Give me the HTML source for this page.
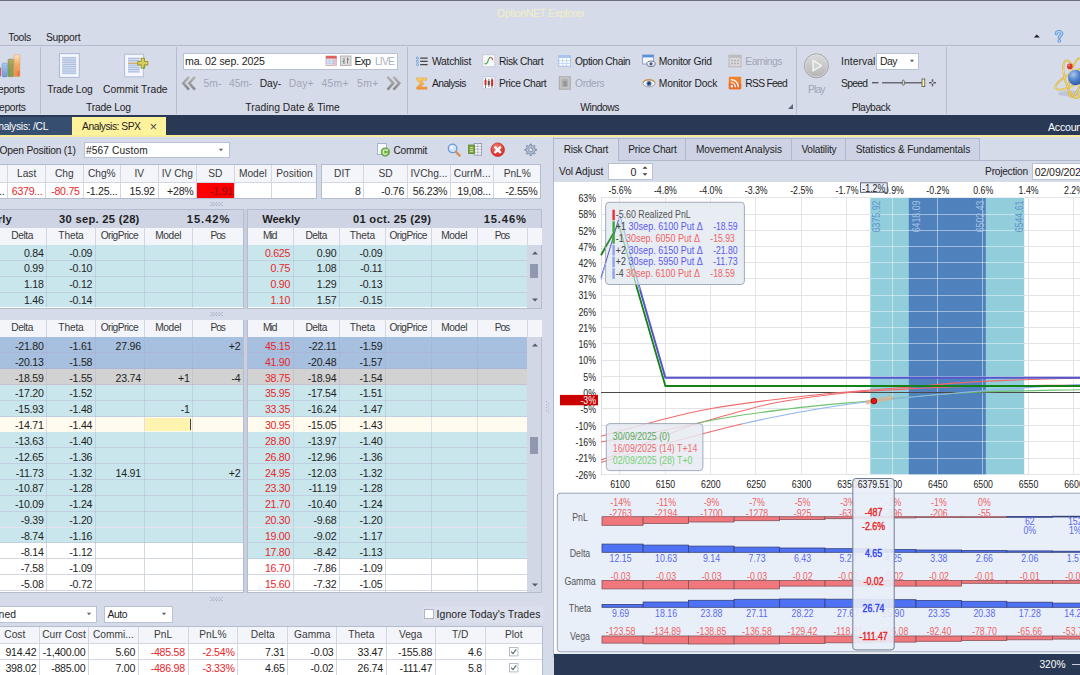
<!DOCTYPE html>
<html><head><meta charset="utf-8"><title>OptionNET Explorer</title>
<style>
html,body{margin:0;padding:0;}
body{width:1080px;height:675px;overflow:hidden;position:relative;background:#d6dbe9;font-family:"Liberation Sans",sans-serif;font-size:10px;color:#1e1e1e;}
.t{position:absolute;white-space:nowrap;line-height:14px;height:14px;font-size:10.3px;}
.g{color:#9ea6b8;}
.r{color:#e8262a;}
svg{position:absolute;overflow:visible;}
svg text{font-family:"Liberation Sans",sans-serif;}
</style></head><body>

<div style="position:absolute;left:0px;top:0px;width:1080px;height:1px;background:#6a6e78;"></div>
<span class="t" style="top:6.7px;letter-spacing:-0.234px;left:540.88px;transform:translateX(-50%);color:#f3efc4;">OptionNET Explorer</span>
<span class="t" style="top:30.7px;letter-spacing:-0.311px;left:8.3px;">Tools</span>
<span class="t" style="top:30.7px;letter-spacing:-0.263px;left:46px;">Support</span>
<div style="position:absolute;left:0px;top:45px;width:1080px;height:1px;background:#b3bacb;"></div>
<svg style="left:1030px;top:28px" width="14" height="16" viewBox="0 0 14 16"><path d="M3.8 9.6 L6.8 6.6 L9.8 9.6 Z" fill="#1e1e1e"/></svg>
<svg style="left:1052.7px;top:28.6px" width="12" height="14" viewBox="0 0 14 16">
<path d="M3.8 5.2C4 2 10.2 2 10.2 5C10.2 7.4 7.3 7.4 7.3 10" fill="none" stroke="#5f90d4" stroke-width="3.7" stroke-linecap="round"/>
<path d="M3.8 5.2C4 2 10.2 2 10.2 5C10.2 7.4 7.3 7.4 7.3 10" fill="none" stroke="#a8ccf6" stroke-width="2" stroke-linecap="round"/>
<circle cx="7.3" cy="13.7" r="1.7" fill="#a8ccf6" stroke="#5f90d4" stroke-width=".9"/></svg>
<div style="position:absolute;left:40px;top:47px;width:1px;height:67px;background:#b6bdce;"></div>
<div style="position:absolute;left:176px;top:47px;width:1px;height:67px;background:#b6bdce;"></div>
<div style="position:absolute;left:407px;top:47px;width:1px;height:67px;background:#b6bdce;"></div>
<div style="position:absolute;left:796px;top:47px;width:1px;height:67px;background:#b6bdce;"></div>
<div style="position:absolute;left:946px;top:47px;width:1px;height:67px;background:#b6bdce;"></div>
<span class="t" style="top:100.7px;letter-spacing:-0.344px;right:1054.34px;">Reports</span>
<span class="t" style="top:100.7px;letter-spacing:-0.196px;left:108.5px;transform:translateX(-50%);">Trade Log</span>
<span class="t" style="top:100.7px;letter-spacing:0.024px;left:292.51px;transform:translateX(-50%);">Trading Date &amp; Time</span>
<span class="t" style="top:100.7px;letter-spacing:-0.447px;left:599.68px;transform:translateX(-50%);">Windows</span>
<span class="t" style="top:100.7px;letter-spacing:-0.413px;left:870.99px;transform:translateX(-50%);">Playback</span>
<svg style="left:787px;top:103px" width="8" height="8" viewBox="0 0 8 8"><path d="M6 1 L6 6 L1 6 Z" fill="#5a6478"/></svg>
<svg style="left:0;top:52px" width="24" height="28" viewBox="0 0 24 28">
<defs><linearGradient id="b1" x1="0" y1="0" x2="0" y2="1"><stop offset="0" stop-color="#fde6b8"/><stop offset=".45" stop-color="#f4a862"/><stop offset="1" stop-color="#ec8a4c"/></linearGradient>
<linearGradient id="b2" x1="0" y1="0" x2="0" y2="1"><stop offset="0" stop-color="#b4ae6c"/><stop offset=".4" stop-color="#9c9c52"/><stop offset="1" stop-color="#8c9a4a"/></linearGradient>
<linearGradient id="b3" x1="0" y1="0" x2="0" y2="1"><stop offset="0" stop-color="#a4ccf2"/><stop offset="1" stop-color="#6a9ad8"/></linearGradient></defs>
<rect x="-3" y="15.6" width="4.1" height="8.9" rx=".8" fill="#d8585a"/>
<rect x="2.1" y="11.2" width="5.3" height="13.7" rx="1" fill="url(#b3)" stroke="#5f8fd2" stroke-width=".5"/>
<rect x="8" y="7.1" width="5.7" height="17.6" rx="1" fill="url(#b2)" stroke="#8a8a50" stroke-width=".5"/>
<rect x="14.1" y="2.8" width="5.8" height="21.7" rx="1" fill="url(#b1)" stroke="#d69a6a" stroke-width=".5"/>
<rect x="17.6" y="19" width="2" height="5.2" fill="#e2603c" opacity=".6"/>
<rect x="8.3" y="16" width="1.2" height="8.4" fill="#6aa85a" opacity=".6"/>
</svg>
<span class="t" style="top:82.7px;letter-spacing:-0.344px;right:1055.34px;">Reports</span>
<svg style="left:58px;top:52px" width="24" height="28" viewBox="0 0 24 28">
<rect x="1.5" y="1.6" width="19.8" height="23.8" fill="#f6f8fd" stroke="#aebbd6" stroke-width="1.1"/>
<rect x="4.2" y="4.8" width="14" height="17.6" fill="#d3ddf1"/>
<g stroke="#a9bbdf" stroke-width="1"><path d="M4.2 5.8H18.2M4.2 8H18.2M4.2 10.2H18.2M4.2 12.4H18.2M4.2 14.6H18.2M4.2 16.8H18.2M4.2 19H18.2M4.2 21.2H18.2"/></g>
</svg>
<span class="t" style="top:82.7px;letter-spacing:-0.146px;left:47.3px;">Trade Log</span>
<svg style="left:123px;top:52px" width="30" height="28" viewBox="0 0 30 28">
<rect x="1.6" y="2.2" width="18.8" height="22.6" fill="#f6f8fd" stroke="#b4c0d8" stroke-width="1.1"/>
<rect x="5" y="5.4" width="11.6" height="15.4" fill="#d6dff2"/>
<g stroke="#aabce0" stroke-width="1"><path d="M5 6.4H16.6M5 8.6H16.6M5 13.2H16.6M5 15.4H16.6M5 17.6H16.6M5 19.8H16.6"/></g>
<path d="M5 11.2H17" stroke="#cfa24c" stroke-width="1.1"/>
<path d="M14.3 11.3H25.3M19.8 5.8V16.8" stroke="#a09a34" stroke-width="4.4"/>
<path d="M15.2 11.1H24.4M19.8 6.7V15.9" stroke="#d8d05c" stroke-width="2.2"/>
<path d="M20 16.4L22 14.2" stroke="#5aae4a" stroke-width="1.4"/>
</svg>
<span class="t" style="top:82.7px;letter-spacing:-0.016px;left:103.1px;">Commit Trade</span>
<div style="position:absolute;left:183px;top:52.6px;width:213px;height:15px;background:#fff;border:1px solid #b9c1d4;"></div>
<span class="t" style="top:54.3px;letter-spacing:-0.127px;left:185px;font-size:10.6px;">ma. 02 sep. 2025</span>
<svg style="left:325px;top:55px" width="28" height="12" viewBox="0 0 28 12">
<rect x="1" y="1" width="10.5" height="9.5" fill="#dfe7f8" stroke="#c9a6a8" stroke-width=".8"/>
<rect x="8" y="3.6" width="3.5" height="6.9" fill="#f4c4c8"/>
<rect x="1" y="1" width="10.5" height="2.6" fill="#e0605c"/>
<g stroke="#b8c4e0" stroke-width=".7"><path d="M1 6H11.5M1 8.3H11.5M4.5 3.6V10.5M8 3.6V10.5"/></g>
<rect x="15.5" y="1" width="10.5" height="9.5" fill="#dcdcdc" stroke="#a8a8a8" stroke-width=".8"/>
<path d="M19 3V9M19 6.5H17.5M22.5 2.5V8.5M22.5 4.5H24" stroke="#777" stroke-width=".9" fill="none"/>
</svg>
<span class="t" style="top:54.5px;letter-spacing:-0.624px;left:354.5px;">Exp</span>
<span class="t" style="top:54.5px;letter-spacing:-0.777px;left:374.9px;color:#aab1c1;">LIVE</span>
<svg style="left:180px;top:76px" width="224" height="14" viewBox="0 0 224 14">
<defs><linearGradient id="cg" x1="0" y1="0" x2="0" y2="1"><stop offset="0" stop-color="#b4b4b4"/><stop offset="1" stop-color="#868686"/></linearGradient></defs>
<g fill="none" stroke="url(#cg)" stroke-width="2.5" stroke-linejoin="miter"><path d="M9 0.8 L3.2 7.2 L9 13.6 M15 0.8 L9.2 7.2 L15 13.6"/><path d="M207.5 0.8 L213.3 7.2 L207.5 13.6 M213.5 0.8 L219.3 7.2 L213.5 13.6"/></g>
</svg>
<span class="t g" style="top:76.7px;letter-spacing:0.031px;left:203.6px;">5m-</span>
<span class="t g" style="top:76.7px;letter-spacing:-0.089px;left:229px;">45m-</span>
<span class="t" style="top:76.7px;letter-spacing:-0.149px;left:259.8px;">Day-</span>
<span class="t g" style="top:76.7px;letter-spacing:0.044px;left:288.8px;font-size:10.4px;">Day+</span>
<span class="t g" style="top:76.7px;letter-spacing:0.232px;left:321.6px;font-size:10.4px;">45m+</span>
<span class="t g" style="top:76.7px;letter-spacing:0.390px;left:357px;font-size:10.4px;">5m+</span>
<svg style="left:415px;top:53.8px" width="14" height="14" viewBox="0 0 14 14"><g fill="#dbe8fa" stroke="#5b8fd6" stroke-width=".8"><circle cx="2.4" cy="4.1" r="1.05"/><circle cx="2.4" cy="7.35" r="1.05"/><circle cx="2.4" cy="10.6" r="1.05"/></g><path d="M5.2 4.1H12.6M5.2 7.35H12.6M5.2 10.6H12.6" stroke="#444" stroke-width="1.25"/></svg>
<span class="t" style="top:55.2px;letter-spacing:-0.250px;left:432px;">Watchlist</span>
<svg style="left:415px;top:75.8px" width="14" height="14" viewBox="0 0 14 14"><defs><linearGradient id="sg" x1="0" y1="0" x2="0" y2="1"><stop offset="0" stop-color="#f8d468"/><stop offset="1" stop-color="#ee8c38"/></linearGradient></defs><path d="M1.6 1.9H11.6V4.3H6.2L9 7.5L6 10.9H12V13.3H1.6V11.3L5.2 7.5L1.6 3.9Z" fill="url(#sg)" stroke="#e09838" stroke-width=".5"/></svg>
<span class="t" style="top:77.2px;letter-spacing:-0.579px;left:432px;">Analysis</span>
<svg style="left:482px;top:53.8px" width="14" height="14" viewBox="0 0 14 14"><rect x=".8" y=".8" width="12" height="12" fill="#f8f9fc" stroke="#c0c6d4" stroke-width=".8"/><path d="M2.5 9.5C4.5 10.5 5.5 9 6 7S7.5 3 9 3.5" fill="none" stroke="#4aa04a" stroke-width="1.1"/><path d="M9 3.5C10.5 4 10.5 6 11 6" fill="none" stroke="#d04040" stroke-width="1.1"/></svg>
<span class="t" style="top:55.2px;letter-spacing:-0.397px;left:499px;">Risk Chart</span>
<svg style="left:482px;top:75.8px" width="14" height="14" viewBox="0 0 14 14"><rect x=".8" y=".8" width="12" height="12" fill="#f8f9fc" stroke="#c0c6d4" stroke-width=".8"/><path d="M3.5 2V12M6.8 3V11M10 2V12" stroke="#444" stroke-width=".7"/><rect x="2.5" y="4" width="2" height="5" fill="#d83030"/><rect x="5.8" y="5" width="2" height="4" fill="#555"/><rect x="9" y="3.5" width="2.2" height="6.5" fill="#d83030"/></svg>
<span class="t" style="top:77.2px;letter-spacing:-0.382px;left:499px;">Price Chart</span>
<svg style="left:558px;top:53.8px" width="14" height="14" viewBox="0 0 14 14"><rect x=".8" y="1.6" width="11.8" height="10.6" fill="#fff" stroke="#9dbbe6" stroke-width=".9"/><rect x=".8" y="1.6" width="11.8" height="2.4" fill="#a6c6f0"/><path d="M.8 6.7H12.6M.8 9.4H12.6M4.7 1.6V12.2M8.7 1.6V12.2" stroke="#b6cef0" stroke-width=".8"/></svg>
<span class="t" style="top:55.2px;letter-spacing:-0.411px;left:575px;">Option Chain</span>
<svg style="left:558px;top:75.8px" width="14" height="14" viewBox="0 0 14 14"><rect x="1.3" y=".8" width="11" height="12.4" fill="#c4c4c4" stroke="#a6a6a6" stroke-width=".9"/><rect x="3.5" y="3" width="6.6" height="8" fill="#b0b0b0"/><text x="6.9" y="10" font-size="7" text-anchor="middle" fill="#8a8a8a" font-weight="bold">$</text></svg>
<span class="t g" style="top:77.2px;letter-spacing:-0.356px;left:575px;">Orders</span>
<svg style="left:642px;top:53.8px" width="14" height="14" viewBox="0 0 14 14"><rect x=".6" y="1" width="11" height="9" fill="#f4f7fc" stroke="#7a9fd6" stroke-width=".9"/><rect x=".6" y="1" width="11" height="2.4" fill="#5b8fd6"/><ellipse cx="9" cy="9.8" rx="4.2" ry="2.7" fill="#f2f2f2" stroke="#556" stroke-width=".8"/><circle cx="9" cy="9.8" r="1.6" fill="#3d5f96"/></svg>
<span class="t" style="top:55.2px;letter-spacing:-0.306px;left:658.8px;">Monitor Grid</span>
<svg style="left:642px;top:75.8px" width="14" height="14" viewBox="0 0 14 14"><ellipse cx="7" cy="7.4" rx="6" ry="3.5" fill="#f4f4f4" stroke="#8a8690" stroke-width=".8"/><path d="M1 6.6C3 2.6 11 2.6 13 6.6" fill="none" stroke="#c89858" stroke-width="1.2"/><circle cx="7" cy="7.4" r="2.5" fill="#4a6faa"/><circle cx="7" cy="7.4" r="1.1" fill="#1d2d50"/></svg>
<span class="t" style="top:77.2px;letter-spacing:-0.189px;left:658.8px;">Monitor Dock</span>
<svg style="left:728px;top:53.8px" width="14" height="14" viewBox="0 0 14 14"><rect x="1" y="1.2" width="12" height="11.6" fill="#dadada" stroke="#b2b2b2" stroke-width=".9"/><rect x="1" y="1.2" width="12" height="2.6" fill="#bcbcbc"/><path d="M3 6.5H5M6 6.5H8M9 6.5H11M3 9.5H5M6 9.5H8M9 9.5H11" stroke="#b0b0b0" stroke-width="1.4"/></svg>
<span class="t g" style="top:55.2px;letter-spacing:-0.522px;left:745.3px;">Earnings</span>
<svg style="left:728px;top:75.8px" width="14" height="14" viewBox="0 0 14 14"><rect x=".8" y=".8" width="12.4" height="12.4" rx="1" fill="#f0822c"/><rect x=".8" y="7" width="12.4" height="6.2" rx="1" fill="#e8602a" opacity=".7"/><circle cx="3.8" cy="10.3" r="1.2" fill="#fff"/><path d="M2.8 6.6A4.6 4.6 0 0 1 7.4 11.2M2.8 3.6A7.6 7.6 0 0 1 10.4 11.2" fill="none" stroke="#fff" stroke-width="1.4"/></svg>
<span class="t" style="top:77.2px;letter-spacing:-0.717px;left:745.3px;">RSS Feed</span>
<svg style="left:802px;top:52px" width="28" height="28" viewBox="0 0 28 28">
<defs><linearGradient id="pg" x1="0" y1="0" x2="0" y2="1"><stop offset="0" stop-color="#dcdcdc"/><stop offset="1" stop-color="#b4b4b4"/></linearGradient></defs>
<circle cx="14.4" cy="13.8" r="12" fill="url(#pg)" stroke="#a4a4a8" stroke-width="1"/><circle cx="14.4" cy="13.8" r="11" fill="none" stroke="#e2e2e2" stroke-width=".8" opacity=".7"/>
<path d="M11 8.3 L19.5 13.6 L11 19 Z" fill="#d2d2d2" stroke="#f4f4f4" stroke-width="1.4" stroke-linejoin="round"/>
</svg>
<span class="t g" style="top:82.7px;letter-spacing:-0.879px;left:808px;">Play</span>
<span class="t" style="top:55.2px;letter-spacing:0.089px;left:841px;">Interval</span>
<div style="position:absolute;left:876px;top:53px;width:41px;height:14.8px;background:#fff;border:1px solid #b9c1d4;"></div>
<span class="t" style="top:54.9px;letter-spacing:-0.547px;left:880px;font-size:10.4px;">Day</span>
<svg style="left:908px;top:58px" width="8" height="6" viewBox="0 0 8 6"><path d="M2 1.8H6L4 4.2Z" fill="#555"/></svg>
<span class="t" style="top:76.7px;letter-spacing:-0.721px;left:841px;">Speed</span>
<svg style="left:870px;top:76px" width="70" height="14" viewBox="0 0 70 14">
<path d="M2 6.7H8.5" stroke="#5a5e6a" stroke-width="1.4"/>
<path d="M12 6.7H53" stroke="#6a6a72" stroke-width="1.4"/>
<rect x="32.3" y="4.1" width="2" height="5.2" rx="1" fill="#eee" stroke="#555" stroke-width=".8"/>
<rect x="52" y="3" width="2.8" height="7.6" fill="#fff3a8" stroke="#555" stroke-width=".8"/>
<path d="M59 6.7H66M62.5 3.3V10.2" stroke="#5a5e6a" stroke-width="1.5"/><circle cx="62.5" cy="6.7" r="1" fill="#d6dbe9"/>
</svg>
<svg style="left:1040px;top:50px" width="40" height="60" viewBox="0 0 40 60">
<defs><radialGradient id="sp" cx=".35" cy=".3" r=".8"><stop offset="0" stop-color="#a9c8f0"/><stop offset=".5" stop-color="#4f80cc"/><stop offset="1" stop-color="#2c5098"/></radialGradient></defs>
<ellipse cx="31" cy="43.5" rx="13" ry="3" fill="#aeb4c6" opacity=".55"/>
<g fill="none" stroke="#d2a830" stroke-width="1.8">
<ellipse cx="35.8" cy="27.6" rx="6" ry="19.6" transform="rotate(13 35.8 27.6)"/>
<ellipse cx="35.6" cy="27.6" rx="22.7" ry="6.2" transform="rotate(-28 35.6 27.6)"/>
</g>
<g fill="none" stroke="#f4de7c" stroke-width=".9">
<ellipse cx="35.8" cy="27.6" rx="6" ry="19.6" transform="rotate(13 35.8 27.6)"/>
<ellipse cx="35.6" cy="27.6" rx="22.7" ry="6.2" transform="rotate(-28 35.6 27.6)"/>
</g>
<circle cx="35.6" cy="27.6" r="7.6" fill="url(#sp)"/>
<ellipse cx="31.6" cy="29.3" rx="6.4" ry="19.6" transform="rotate(-17 31.6 29.3)" fill="none" stroke="#d2a830" stroke-width="1.8" stroke-dasharray="62 26" stroke-dashoffset="-14"/>
<ellipse cx="31.6" cy="29.3" rx="6.4" ry="19.6" transform="rotate(-17 31.6 29.3)" fill="none" stroke="#f4de7c" stroke-width=".9" stroke-dasharray="62 26" stroke-dashoffset="-14"/>
<circle cx="29.8" cy="16.4" r="2.8" fill="#d8362c"/><circle cx="29" cy="15.6" r="1" fill="#f08a7a"/>
</svg>
<div style="position:absolute;left:0px;top:115px;width:1080px;height:21px;background:#293955;"></div>
<div style="position:absolute;left:0px;top:117px;width:71.5px;height:18.5px;background:#364e6f;"></div>
<span class="t" style="top:120px;letter-spacing:-0.275px;right:1031.88px;color:#fff;">Analysis: /CL</span>
<div style="position:absolute;left:71.5px;top:117px;width:94.3px;height:18.5px;background:#fff29d;"></div>
<span class="t" style="top:120px;letter-spacing:-0.474px;left:82px;color:#1e1e1e;">Analysis: SPX</span>
<span class="t" style="top:119.5px;left:153.4px;transform:translateX(-50%);font-size:12.5px;color:#4a4a4a;">×</span>
<div style="position:absolute;left:0px;top:135px;width:1080px;height:2px;background:#f8ec9c;"></div>
<span class="t" style="top:120px;letter-spacing:-0.217px;left:1048px;font-size:10.6px;color:#fff;">Account</span>
<span class="t" style="top:143.7px;letter-spacing:-0.228px;left:-0.5px;">Open Position (1)</span>
<div style="position:absolute;left:84px;top:142px;width:144px;height:14px;background:#fff;border:1px solid #b9c1d4;"></div>
<span class="t" style="top:143.7px;letter-spacing:0.123px;left:85.9px;font-size:10.2px;">#567 Custom</span>
<svg style="left:217px;top:147px" width="8" height="6" viewBox="0 0 8 6"><path d="M1.9 1.7H6.1L4 4.3Z" fill="#5c6070"/></svg>
<svg style="left:376px;top:142px" width="16" height="16" viewBox="0 0 16 16">
<rect x="1.5" y="1.5" width="9" height="11" fill="#f8faff" stroke="#9fb0cf" stroke-width=".9"/>
<circle cx="9.3" cy="10" r="4.1" fill="#7ab648" stroke="#4d8a26" stroke-width=".7"/>
<path d="M11 8.4A2.3 2.3 0 1 0 11.2 11.4" fill="none" stroke="#e8f4d8" stroke-width="1.1"/>
<path d="M11.8 6.8V9H9.6Z" fill="#e8f4d8"/>
</svg>
<span class="t" style="top:143.7px;letter-spacing:-0.246px;left:393.5px;font-size:10.2px;">Commit</span>
<svg style="left:446px;top:142px" width="18" height="18" viewBox="0 0 18 18">
<circle cx="6.6" cy="6.4" r="4.3" fill="#cfe3fa" stroke="#6a9ade" stroke-width="1.3"/>
<circle cx="5.6" cy="5.2" r="1.5" fill="#fff" opacity=".8"/>
<path d="M9.9 9.7 L13.6 13.6" stroke="#d09058" stroke-width="2.3" stroke-linecap="round"/>
</svg>
<svg style="left:467px;top:142px" width="18" height="16" viewBox="0 0 18 16">
<rect x="7" y="1.5" width="7.6" height="11.6" fill="#f4f6fb" stroke="#8a94a8" stroke-width=".8"/>
<path d="M7 4.4H14.6M7 7.3H14.6M7 10.2H14.6M10.8 1.5V13.1" stroke="#a4acbc" stroke-width=".7"/>
<rect x="1.5" y="3" width="6" height="8.5" fill="#7aa83c" stroke="#547c22" stroke-width=".7"/>
<path d="M3 5.5H6M3 7.5H6M3 9.5H6" stroke="#d6e8b8" stroke-width=".8"/>
</svg>
<svg style="left:489px;top:141px" width="18" height="18" viewBox="0 0 18 18">
<defs><radialGradient id="rx" cx=".4" cy=".3" r=".8"><stop offset="0" stop-color="#f87a6e"/><stop offset="1" stop-color="#cf1f1a"/></radialGradient></defs>
<circle cx="8.7" cy="8.7" r="6.8" fill="url(#rx)" stroke="#b81c18" stroke-width=".6"/>
<path d="M6.3 6.3 L11.1 11.1 M11.1 6.3 L6.3 11.1" stroke="#fff" stroke-width="2.5" stroke-linecap="round"/>
</svg>
<svg style="left:522px;top:142px" width="16" height="16" viewBox="0 0 16 16"><path d="M12.94 7.06L14.47 7.21L14.47 8.39L12.94 8.54L12.22 10.27L13.20 11.46L12.36 12.30L11.17 11.32L9.44 12.04L9.29 13.57L8.11 13.57L7.96 12.04L6.23 11.32L5.04 12.30L4.20 11.46L5.18 10.27L4.46 8.54L2.93 8.39L2.93 7.21L4.46 7.06L5.18 5.33L4.20 4.14L5.04 3.30L6.23 4.28L7.96 3.56L8.11 2.03L9.29 2.03L9.44 3.56L11.17 4.28L12.36 3.30L13.20 4.14L12.22 5.33Z" fill="#b4c0d6" stroke="#7886a4" stroke-width=".9" stroke-linejoin="round"/><circle cx="8.7" cy="7.8" r="2" fill="#dfe4ee" stroke="#7886a4" stroke-width=".9"/></svg>
<div style="position:absolute;left:-30px;top:164.4px;width:347.3px;height:34.2px;background:#fff;border:1px solid #b4bccf;box-sizing:border-box;"></div>
<div style="position:absolute;left:-29px;top:165.4px;width:345.3px;height:17.6px;background:#f3f5fa;border-bottom:1px solid #d3d7e3;box-sizing:border-box;"></div>
<div style="position:absolute;left:7px;top:165.4px;width:1px;height:32.2px;background:#d3d7e3;"></div>
<span class="t" style="top:184.4px;letter-spacing:-0.250px;right:1075.65px;font-size:10.6px;">...</span>
<div style="position:absolute;left:45px;top:165.4px;width:1px;height:32.2px;background:#d3d7e3;"></div>
<span class="t" style="top:167.2px;left:26.65px;transform:translateX(-50%);font-size:10.2px;color:#3a3a3a;">Last</span>
<span class="t" style="top:184.4px;letter-spacing:-0.250px;right:1037.55px;font-size:10.6px;color:#e8262a;">6379...</span>
<div style="position:absolute;left:83px;top:165.4px;width:1px;height:32.2px;background:#d3d7e3;"></div>
<span class="t" style="top:167.2px;left:64.35px;transform:translateX(-50%);font-size:10.2px;color:#3a3a3a;">Chg</span>
<span class="t" style="top:184.4px;letter-spacing:-0.250px;right:1000.25px;font-size:10.6px;color:#e8262a;">-80.75</span>
<div style="position:absolute;left:120px;top:165.4px;width:1px;height:32.2px;background:#d3d7e3;"></div>
<span class="t" style="top:167.2px;left:101.8px;transform:translateX(-50%);font-size:10.2px;color:#3a3a3a;">Chg%</span>
<span class="t" style="top:184.4px;letter-spacing:-0.250px;right:962.65px;font-size:10.6px;">-1.25...</span>
<div style="position:absolute;left:158px;top:165.4px;width:1px;height:32.2px;background:#d3d7e3;"></div>
<span class="t" style="top:167.2px;left:139.3px;transform:translateX(-50%);font-size:10.2px;color:#3a3a3a;">IV</span>
<span class="t" style="top:184.4px;letter-spacing:-0.250px;right:925.25px;font-size:10.6px;">15.92</span>
<div style="position:absolute;left:196px;top:165.4px;width:1px;height:32.2px;background:#d3d7e3;"></div>
<span class="t" style="top:167.2px;left:177.35px;transform:translateX(-50%);font-size:10.2px;color:#3a3a3a;">IV Chg</span>
<span class="t" style="top:184.4px;letter-spacing:-0.250px;right:886.55px;font-size:10.6px;">+28%</span>
<div style="position:absolute;left:234px;top:165.4px;width:1px;height:32.2px;background:#d3d7e3;"></div>
<span class="t" style="top:167.2px;left:215.35px;transform:translateX(-50%);font-size:10.2px;color:#3a3a3a;">SD</span>
<div style="position:absolute;left:197px;top:183px;width:37px;height:14.6px;background:#ff0000;"></div>
<span class="t" style="top:184.4px;letter-spacing:-0.250px;right:847.05px;font-size:10.6px;color:#8a0c0c;">-1.91</span>
<div style="position:absolute;left:271px;top:165.4px;width:1px;height:32.2px;background:#d3d7e3;"></div>
<span class="t" style="top:167.2px;left:252.8px;transform:translateX(-50%);font-size:10.2px;color:#3a3a3a;">Model</span>
<span class="t" style="top:167.2px;left:294.45px;transform:translateX(-50%);font-size:10.2px;color:#3a3a3a;">Position</span>
<div style="position:absolute;left:320.6px;top:164.4px;width:220px;height:34.2px;background:#fff;border:1px solid #b4bccf;box-sizing:border-box;"></div>
<div style="position:absolute;left:321.6px;top:165.4px;width:218px;height:17.6px;background:#f3f5fa;border-bottom:1px solid #d3d7e3;box-sizing:border-box;"></div>
<div style="position:absolute;left:363px;top:165.4px;width:1px;height:32.2px;background:#d3d7e3;"></div>
<span class="t" style="top:167.2px;left:342.25px;transform:translateX(-50%);font-size:10.2px;color:#3a3a3a;">DIT</span>
<span class="t" style="top:184.4px;letter-spacing:-0.250px;right:719.35px;font-size:10.6px;">8</span>
<div style="position:absolute;left:407px;top:165.4px;width:1px;height:32.2px;background:#d3d7e3;"></div>
<span class="t" style="top:167.2px;left:385.65px;transform:translateX(-50%);font-size:10.2px;color:#3a3a3a;">SD</span>
<span class="t" style="top:184.4px;letter-spacing:-0.250px;right:675.85px;font-size:10.6px;">-0.76</span>
<div style="position:absolute;left:450px;top:165.4px;width:1px;height:32.2px;background:#d3d7e3;"></div>
<span class="t" style="top:167.2px;left:428.95px;transform:translateX(-50%);font-size:10.2px;color:#3a3a3a;">IVChg...</span>
<span class="t" style="top:184.4px;letter-spacing:-0.250px;right:632.75px;font-size:10.6px;">56.23%</span>
<div style="position:absolute;left:493px;top:165.4px;width:1px;height:32.2px;background:#d3d7e3;"></div>
<span class="t" style="top:167.2px;left:472.2px;transform:translateX(-50%);font-size:10.2px;color:#3a3a3a;">CurrM...</span>
<span class="t" style="top:184.4px;letter-spacing:-0.250px;right:589.35px;font-size:10.6px;">19,08...</span>
<span class="t" style="top:167.2px;left:517.25px;transform:translateX(-50%);font-size:10.2px;color:#3a3a3a;">PnL%</span>
<span class="t" style="top:184.4px;letter-spacing:-0.250px;right:542.65px;font-size:10.6px;">-2.55%</span>
<svg style="left:209.5px;top:201.8px" width="14" height="5" viewBox="0 0 14 5"><g fill="#9099b2"><circle cx="1.0" cy=".7" r=".55"/><circle cx="1.0" cy="3.5" r=".55"/><circle cx="3.8" cy=".7" r=".55"/><circle cx="3.8" cy="3.5" r=".55"/><circle cx="6.6" cy=".7" r=".55"/><circle cx="6.6" cy="3.5" r=".55"/><circle cx="9.399999999999999" cy=".7" r=".55"/><circle cx="9.399999999999999" cy="3.5" r=".55"/><circle cx="12.2" cy=".7" r=".55"/><circle cx="12.2" cy="3.5" r=".55"/><circle cx="2.4" cy="2.1" r=".55"/><circle cx="5.199999999999999" cy="2.1" r=".55"/><circle cx="8.0" cy="2.1" r=".55"/><circle cx="10.799999999999999" cy="2.1" r=".55"/></g></svg>
<svg style="left:209.5px;top:312px" width="14" height="5" viewBox="0 0 14 5"><g fill="#9099b2"><circle cx="1.0" cy=".7" r=".55"/><circle cx="1.0" cy="3.5" r=".55"/><circle cx="3.8" cy=".7" r=".55"/><circle cx="3.8" cy="3.5" r=".55"/><circle cx="6.6" cy=".7" r=".55"/><circle cx="6.6" cy="3.5" r=".55"/><circle cx="9.399999999999999" cy=".7" r=".55"/><circle cx="9.399999999999999" cy="3.5" r=".55"/><circle cx="12.2" cy=".7" r=".55"/><circle cx="12.2" cy="3.5" r=".55"/><circle cx="2.4" cy="2.1" r=".55"/><circle cx="5.199999999999999" cy="2.1" r=".55"/><circle cx="8.0" cy="2.1" r=".55"/><circle cx="10.799999999999999" cy="2.1" r=".55"/></g></svg>
<svg style="left:209.5px;top:596.6px" width="14" height="5" viewBox="0 0 14 5"><g fill="#9099b2"><circle cx="1.0" cy=".7" r=".55"/><circle cx="1.0" cy="3.5" r=".55"/><circle cx="3.8" cy=".7" r=".55"/><circle cx="3.8" cy="3.5" r=".55"/><circle cx="6.6" cy=".7" r=".55"/><circle cx="6.6" cy="3.5" r=".55"/><circle cx="9.399999999999999" cy=".7" r=".55"/><circle cx="9.399999999999999" cy="3.5" r=".55"/><circle cx="12.2" cy=".7" r=".55"/><circle cx="12.2" cy="3.5" r=".55"/><circle cx="2.4" cy="2.1" r=".55"/><circle cx="5.199999999999999" cy="2.1" r=".55"/><circle cx="8.0" cy="2.1" r=".55"/><circle cx="10.799999999999999" cy="2.1" r=".55"/></g></svg>
<div style="position:absolute;left:243px;top:209px;width:4.5px;height:99.5px;background:#c9cfde;"></div>
<div style="position:absolute;left:243px;top:319.6px;width:4.5px;height:273.4px;background:#c9cfde;"></div>
<div style="position:absolute;left:-40px;top:209px;width:283.6px;height:99.5px;background:#fff;border:1px solid #b4bccf;box-sizing:border-box;"></div>
<div style="position:absolute;left:-39px;top:210px;width:281.6px;height:17.8px;background:#ced4e4;"></div>
<span class="t" style="top:211.8px;letter-spacing:0.150px;right:1068.05px;font-size:11.2px;font-weight:bold;color:#1e1e1e;">Quarterly</span>
<span class="t" style="top:211.8px;letter-spacing:0.273px;left:99.34px;transform:translateX(-50%);font-size:11.2px;font-weight:bold;color:#1e1e1e;">30 sep. 25 (28)</span>
<span class="t" style="top:211.8px;letter-spacing:0.963px;right:849.54px;font-size:11.2px;font-weight:bold;color:#1e1e1e;">15.42%</span>
<div style="position:absolute;left:-39px;top:227.8px;width:281.6px;height:17.2px;background:#f3f5fa;"></div>
<div style="position:absolute;left:-39px;top:245px;width:282px;height:15.85px;background:#c9e6ec;"></div>
<div style="position:absolute;left:-39px;top:260px;width:282px;height:1px;background:rgba(176,160,200,.3);"></div>
<div style="position:absolute;left:-39px;top:260.85px;width:282px;height:15.85px;background:#c9e6ec;"></div>
<div style="position:absolute;left:-39px;top:276px;width:282px;height:1px;background:rgba(176,160,200,.3);"></div>
<div style="position:absolute;left:-39px;top:276.7px;width:282px;height:15.85px;background:#c9e6ec;"></div>
<div style="position:absolute;left:-39px;top:292px;width:282px;height:1px;background:rgba(176,160,200,.3);"></div>
<div style="position:absolute;left:-39px;top:292.55px;width:282px;height:14.95px;background:#c9e6ec;"></div>
<div style="position:absolute;left:-2px;top:227.8px;width:1px;height:17.2px;background:#d3d7e3;"></div>
<div style="position:absolute;left:-2px;top:245px;width:1px;height:62.5px;background:rgba(176,160,200,.3);"></div>
<div style="position:absolute;left:46px;top:227.8px;width:1px;height:17.2px;background:#d3d7e3;"></div>
<div style="position:absolute;left:46px;top:245px;width:1px;height:62.5px;background:rgba(176,160,200,.3);"></div>
<div style="position:absolute;left:95px;top:227.8px;width:1px;height:17.2px;background:#d3d7e3;"></div>
<div style="position:absolute;left:95px;top:245px;width:1px;height:62.5px;background:rgba(176,160,200,.3);"></div>
<div style="position:absolute;left:144px;top:227.8px;width:1px;height:17.2px;background:#d3d7e3;"></div>
<div style="position:absolute;left:144px;top:245px;width:1px;height:62.5px;background:rgba(176,160,200,.3);"></div>
<div style="position:absolute;left:192px;top:227.8px;width:1px;height:17.2px;background:#d3d7e3;"></div>
<div style="position:absolute;left:192px;top:245px;width:1px;height:62.5px;background:rgba(176,160,200,.3);"></div>
<span class="t" style="top:229.4px;letter-spacing:-0.453px;left:22.12px;transform:translateX(-50%);font-size:10.2px;color:#3a3a3a;">Delta</span>
<span class="t" style="top:229.4px;letter-spacing:-0.171px;left:70.96px;transform:translateX(-50%);font-size:10.2px;color:#3a3a3a;">Theta</span>
<span class="t" style="top:229.4px;letter-spacing:-0.576px;left:119.41px;transform:translateX(-50%);font-size:10.2px;color:#3a3a3a;">OrigPrice</span>
<span class="t" style="top:229.4px;letter-spacing:-0.370px;left:168.16px;transform:translateX(-50%);font-size:10.2px;color:#3a3a3a;">Model</span>
<span class="t" style="top:229.4px;letter-spacing:-1.188px;left:217.56px;transform:translateX(-50%);font-size:10.2px;color:#3a3a3a;">Pos</span>
<span class="t" style="top:245.62px;letter-spacing:-0.250px;right:1036.45px;font-size:10.6px;">0.84</span>
<span class="t" style="top:245.62px;letter-spacing:-0.250px;right:987.75px;font-size:10.6px;">-0.09</span>
<span class="t" style="top:261.48px;letter-spacing:-0.250px;right:1036.45px;font-size:10.6px;">0.99</span>
<span class="t" style="top:261.48px;letter-spacing:-0.250px;right:987.75px;font-size:10.6px;">-0.10</span>
<span class="t" style="top:277.32px;letter-spacing:-0.250px;right:1036.45px;font-size:10.6px;">1.18</span>
<span class="t" style="top:277.32px;letter-spacing:-0.250px;right:987.75px;font-size:10.6px;">-0.12</span>
<span class="t" style="top:293.18px;letter-spacing:-0.250px;right:1036.45px;font-size:10.6px;">1.46</span>
<span class="t" style="top:293.18px;letter-spacing:-0.250px;right:987.75px;font-size:10.6px;">-0.14</span>
<div style="position:absolute;left:247px;top:209px;width:295.3px;height:99.5px;background:#fff;border:1px solid #b4bccf;box-sizing:border-box;"></div>
<div style="position:absolute;left:248px;top:210px;width:293.3px;height:17.8px;background:#ced4e4;"></div>
<span class="t" style="top:211.8px;letter-spacing:-0.079px;left:262.2px;font-size:11.2px;font-weight:bold;color:#1e1e1e;">Weekly</span>
<span class="t" style="top:211.8px;letter-spacing:0.287px;left:392.04px;transform:translateX(-50%);font-size:11.2px;font-weight:bold;color:#1e1e1e;">01 oct. 25 (29)</span>
<span class="t" style="top:211.8px;letter-spacing:0.843px;right:553.26px;font-size:11.2px;font-weight:bold;color:#1e1e1e;">15.46%</span>
<div style="position:absolute;left:248px;top:227.8px;width:293.3px;height:17.2px;background:#f3f5fa;"></div>
<div style="position:absolute;left:248px;top:245px;width:279px;height:15.85px;background:#c9e6ec;"></div>
<div style="position:absolute;left:248px;top:260px;width:279px;height:1px;background:rgba(176,160,200,.3);"></div>
<div style="position:absolute;left:248px;top:260.85px;width:279px;height:15.85px;background:#c9e6ec;"></div>
<div style="position:absolute;left:248px;top:276px;width:279px;height:1px;background:rgba(176,160,200,.3);"></div>
<div style="position:absolute;left:248px;top:276.7px;width:279px;height:15.85px;background:#c9e6ec;"></div>
<div style="position:absolute;left:248px;top:292px;width:279px;height:1px;background:rgba(176,160,200,.3);"></div>
<div style="position:absolute;left:248px;top:292.55px;width:279px;height:14.95px;background:#c9e6ec;"></div>
<div style="position:absolute;left:293px;top:227.8px;width:1px;height:17.2px;background:#d3d7e3;"></div>
<div style="position:absolute;left:293px;top:245px;width:1px;height:62.5px;background:rgba(176,160,200,.3);"></div>
<div style="position:absolute;left:339px;top:227.8px;width:1px;height:17.2px;background:#d3d7e3;"></div>
<div style="position:absolute;left:339px;top:245px;width:1px;height:62.5px;background:rgba(176,160,200,.3);"></div>
<div style="position:absolute;left:385px;top:227.8px;width:1px;height:17.2px;background:#d3d7e3;"></div>
<div style="position:absolute;left:385px;top:245px;width:1px;height:62.5px;background:rgba(176,160,200,.3);"></div>
<div style="position:absolute;left:431px;top:227.8px;width:1px;height:17.2px;background:#d3d7e3;"></div>
<div style="position:absolute;left:431px;top:245px;width:1px;height:62.5px;background:rgba(176,160,200,.3);"></div>
<div style="position:absolute;left:477px;top:227.8px;width:1px;height:17.2px;background:#d3d7e3;"></div>
<div style="position:absolute;left:477px;top:245px;width:1px;height:62.5px;background:rgba(176,160,200,.3);"></div>
<div style="position:absolute;left:527px;top:227.8px;width:1px;height:17.2px;background:#d3d7e3;"></div>
<div style="position:absolute;left:527px;top:245px;width:1px;height:62.5px;background:rgba(176,160,200,.3);"></div>
<span class="t" style="top:229.4px;letter-spacing:-1.018px;left:269.64px;transform:translateX(-50%);font-size:10.2px;color:#3a3a3a;">Mid</span>
<span class="t" style="top:229.4px;letter-spacing:-0.453px;left:316.17px;transform:translateX(-50%);font-size:10.2px;color:#3a3a3a;">Delta</span>
<span class="t" style="top:229.4px;letter-spacing:-0.171px;left:362.41px;transform:translateX(-50%);font-size:10.2px;color:#3a3a3a;">Theta</span>
<span class="t" style="top:229.4px;letter-spacing:-0.576px;left:408.11px;transform:translateX(-50%);font-size:10.2px;color:#3a3a3a;">OrigPrice</span>
<span class="t" style="top:229.4px;letter-spacing:-0.370px;left:454.16px;transform:translateX(-50%);font-size:10.2px;color:#3a3a3a;">Model</span>
<span class="t" style="top:229.4px;letter-spacing:-1.188px;left:501.86px;transform:translateX(-50%);font-size:10.2px;color:#3a3a3a;">Pos</span>
<span class="t" style="top:245.62px;letter-spacing:-0.250px;right:789.85px;font-size:10.6px;color:#e8262a;">0.625</span>
<span class="t" style="top:245.62px;letter-spacing:-0.250px;right:743.65px;font-size:10.6px;">0.90</span>
<span class="t" style="top:245.62px;letter-spacing:-0.250px;right:697.65px;font-size:10.6px;">-0.09</span>
<span class="t" style="top:261.48px;letter-spacing:-0.250px;right:789.85px;font-size:10.6px;color:#e8262a;">0.75</span>
<span class="t" style="top:261.48px;letter-spacing:-0.250px;right:743.65px;font-size:10.6px;">1.08</span>
<span class="t" style="top:261.48px;letter-spacing:-0.250px;right:697.65px;font-size:10.6px;">-0.11</span>
<span class="t" style="top:277.32px;letter-spacing:-0.250px;right:789.85px;font-size:10.6px;color:#e8262a;">0.90</span>
<span class="t" style="top:277.32px;letter-spacing:-0.250px;right:743.65px;font-size:10.6px;">1.29</span>
<span class="t" style="top:277.32px;letter-spacing:-0.250px;right:697.65px;font-size:10.6px;">-0.13</span>
<span class="t" style="top:293.18px;letter-spacing:-0.250px;right:789.85px;font-size:10.6px;color:#e8262a;">1.10</span>
<span class="t" style="top:293.18px;letter-spacing:-0.250px;right:743.65px;font-size:10.6px;">1.57</span>
<span class="t" style="top:293.18px;letter-spacing:-0.250px;right:697.65px;font-size:10.6px;">-0.15</span>
<div style="position:absolute;left:-40px;top:319.6px;width:283.6px;height:273.4px;background:#fff;border:1px solid #b4bccf;box-sizing:border-box;"></div>
<div style="position:absolute;left:-39px;top:319.6px;width:281.6px;height:17.2px;background:#f3f5fa;"></div>
<div style="position:absolute;left:-39px;top:337.3px;width:282px;height:15.85px;background:#a8c0e0;"></div>
<div style="position:absolute;left:-39px;top:352px;width:282px;height:1px;background:rgba(176,160,200,.3);"></div>
<div style="position:absolute;left:-39px;top:353.15px;width:282px;height:15.85px;background:#a8c0e0;"></div>
<div style="position:absolute;left:-39px;top:368px;width:282px;height:1px;background:rgba(176,160,200,.3);"></div>
<div style="position:absolute;left:-39px;top:369px;width:282px;height:15.85px;background:#d2d2d2;"></div>
<div style="position:absolute;left:-39px;top:384px;width:282px;height:1px;background:rgba(176,160,200,.3);"></div>
<div style="position:absolute;left:-39px;top:384.85px;width:282px;height:15.85px;background:#c9e6ec;"></div>
<div style="position:absolute;left:-39px;top:400px;width:282px;height:1px;background:rgba(176,160,200,.3);"></div>
<div style="position:absolute;left:-39px;top:400.7px;width:282px;height:15.85px;background:#c9e6ec;"></div>
<div style="position:absolute;left:-39px;top:416px;width:282px;height:1px;background:rgba(176,160,200,.3);"></div>
<div style="position:absolute;left:-39px;top:416.55px;width:282px;height:15.85px;background:#fffbee;"></div>
<div style="position:absolute;left:-39px;top:432px;width:282px;height:1px;background:rgba(176,160,200,.3);"></div>
<div style="position:absolute;left:-39px;top:432.4px;width:282px;height:15.85px;background:#c9e6ec;"></div>
<div style="position:absolute;left:-39px;top:447px;width:282px;height:1px;background:rgba(176,160,200,.3);"></div>
<div style="position:absolute;left:-39px;top:448.25px;width:282px;height:15.85px;background:#c9e6ec;"></div>
<div style="position:absolute;left:-39px;top:463px;width:282px;height:1px;background:rgba(176,160,200,.3);"></div>
<div style="position:absolute;left:-39px;top:464.1px;width:282px;height:15.85px;background:#c9e6ec;"></div>
<div style="position:absolute;left:-39px;top:479px;width:282px;height:1px;background:rgba(176,160,200,.3);"></div>
<div style="position:absolute;left:-39px;top:479.95px;width:282px;height:15.85px;background:#c9e6ec;"></div>
<div style="position:absolute;left:-39px;top:495px;width:282px;height:1px;background:rgba(176,160,200,.3);"></div>
<div style="position:absolute;left:-39px;top:495.8px;width:282px;height:15.85px;background:#c9e6ec;"></div>
<div style="position:absolute;left:-39px;top:511px;width:282px;height:1px;background:rgba(176,160,200,.3);"></div>
<div style="position:absolute;left:-39px;top:511.65px;width:282px;height:15.85px;background:#c9e6ec;"></div>
<div style="position:absolute;left:-39px;top:527px;width:282px;height:1px;background:rgba(176,160,200,.3);"></div>
<div style="position:absolute;left:-39px;top:527.5px;width:282px;height:15.85px;background:#c9e6ec;"></div>
<div style="position:absolute;left:-39px;top:542px;width:282px;height:1px;background:rgba(176,160,200,.3);"></div>
<div style="position:absolute;left:-39px;top:543.35px;width:282px;height:15.85px;background:#ffffff;"></div>
<div style="position:absolute;left:-39px;top:558px;width:282px;height:1px;background:#d3d7e3;"></div>
<div style="position:absolute;left:-39px;top:559.2px;width:282px;height:15.85px;background:#ffffff;"></div>
<div style="position:absolute;left:-39px;top:574px;width:282px;height:1px;background:#d3d7e3;"></div>
<div style="position:absolute;left:-39px;top:575.05px;width:282px;height:15.85px;background:#ffffff;"></div>
<div style="position:absolute;left:-39px;top:590px;width:282px;height:1px;background:#d3d7e3;"></div>
<div style="position:absolute;left:-39px;top:590.9px;width:282px;height:1.1px;background:#ffffff;"></div>
<div style="position:absolute;left:-2px;top:319.6px;width:1px;height:17.2px;background:#d3d7e3;"></div>
<div style="position:absolute;left:-2px;top:337.3px;width:1px;height:254.7px;background:rgba(176,160,200,.3);"></div>
<div style="position:absolute;left:-2px;top:543.35px;width:1px;height:48.65px;background:#d3d7e3;"></div>
<div style="position:absolute;left:46px;top:319.6px;width:1px;height:17.2px;background:#d3d7e3;"></div>
<div style="position:absolute;left:46px;top:337.3px;width:1px;height:254.7px;background:rgba(176,160,200,.3);"></div>
<div style="position:absolute;left:46px;top:543.35px;width:1px;height:48.65px;background:#d3d7e3;"></div>
<div style="position:absolute;left:95px;top:319.6px;width:1px;height:17.2px;background:#d3d7e3;"></div>
<div style="position:absolute;left:95px;top:337.3px;width:1px;height:254.7px;background:rgba(176,160,200,.3);"></div>
<div style="position:absolute;left:95px;top:543.35px;width:1px;height:48.65px;background:#d3d7e3;"></div>
<div style="position:absolute;left:144px;top:319.6px;width:1px;height:17.2px;background:#d3d7e3;"></div>
<div style="position:absolute;left:144px;top:337.3px;width:1px;height:254.7px;background:rgba(176,160,200,.3);"></div>
<div style="position:absolute;left:144px;top:543.35px;width:1px;height:48.65px;background:#d3d7e3;"></div>
<div style="position:absolute;left:192px;top:319.6px;width:1px;height:17.2px;background:#d3d7e3;"></div>
<div style="position:absolute;left:192px;top:337.3px;width:1px;height:254.7px;background:rgba(176,160,200,.3);"></div>
<div style="position:absolute;left:192px;top:543.35px;width:1px;height:48.65px;background:#d3d7e3;"></div>
<span class="t" style="top:321.2px;letter-spacing:-0.453px;left:22.12px;transform:translateX(-50%);font-size:10.2px;color:#3a3a3a;">Delta</span>
<span class="t" style="top:321.2px;letter-spacing:-0.171px;left:70.96px;transform:translateX(-50%);font-size:10.2px;color:#3a3a3a;">Theta</span>
<span class="t" style="top:321.2px;letter-spacing:-0.576px;left:119.41px;transform:translateX(-50%);font-size:10.2px;color:#3a3a3a;">OrigPrice</span>
<span class="t" style="top:321.2px;letter-spacing:-0.370px;left:168.16px;transform:translateX(-50%);font-size:10.2px;color:#3a3a3a;">Model</span>
<span class="t" style="top:321.2px;letter-spacing:-1.188px;left:217.56px;transform:translateX(-50%);font-size:10.2px;color:#3a3a3a;">Pos</span>
<span class="t" style="top:338.82px;letter-spacing:-0.250px;right:1036.45px;font-size:10.6px;">-21.80</span>
<span class="t" style="top:338.82px;letter-spacing:-0.250px;right:987.75px;font-size:10.6px;">-1.61</span>
<span class="t" style="top:338.82px;letter-spacing:-0.250px;right:939.15px;font-size:10.6px;">27.96</span>
<span class="t" style="top:338.82px;letter-spacing:-0.250px;right:839.55px;font-size:10.6px;">+2</span>
<span class="t" style="top:354.68px;letter-spacing:-0.250px;right:1036.45px;font-size:10.6px;">-20.13</span>
<span class="t" style="top:354.68px;letter-spacing:-0.250px;right:987.75px;font-size:10.6px;">-1.58</span>
<span class="t" style="top:370.52px;letter-spacing:-0.250px;right:1036.45px;font-size:10.6px;">-18.59</span>
<span class="t" style="top:370.52px;letter-spacing:-0.250px;right:987.75px;font-size:10.6px;">-1.55</span>
<span class="t" style="top:370.52px;letter-spacing:-0.250px;right:939.15px;font-size:10.6px;">23.74</span>
<span class="t" style="top:370.52px;letter-spacing:-0.250px;right:890.45px;font-size:10.6px;">+1</span>
<span class="t" style="top:370.52px;letter-spacing:-0.250px;right:839.55px;font-size:10.6px;">-4</span>
<span class="t" style="top:386.38px;letter-spacing:-0.250px;right:1036.45px;font-size:10.6px;">-17.20</span>
<span class="t" style="top:386.38px;letter-spacing:-0.250px;right:987.75px;font-size:10.6px;">-1.52</span>
<span class="t" style="top:402.22px;letter-spacing:-0.250px;right:1036.45px;font-size:10.6px;">-15.93</span>
<span class="t" style="top:402.22px;letter-spacing:-0.250px;right:987.75px;font-size:10.6px;">-1.48</span>
<span class="t" style="top:402.22px;letter-spacing:-0.250px;right:890.45px;font-size:10.6px;">-1</span>
<span class="t" style="top:418.07px;letter-spacing:-0.250px;right:1036.45px;font-size:10.6px;">-14.71</span>
<span class="t" style="top:418.07px;letter-spacing:-0.250px;right:987.75px;font-size:10.6px;">-1.44</span>
<span class="t" style="top:433.92px;letter-spacing:-0.250px;right:1036.45px;font-size:10.6px;">-13.63</span>
<span class="t" style="top:433.92px;letter-spacing:-0.250px;right:987.75px;font-size:10.6px;">-1.40</span>
<span class="t" style="top:449.77px;letter-spacing:-0.250px;right:1036.45px;font-size:10.6px;">-12.65</span>
<span class="t" style="top:449.77px;letter-spacing:-0.250px;right:987.75px;font-size:10.6px;">-1.36</span>
<span class="t" style="top:465.62px;letter-spacing:-0.250px;right:1036.45px;font-size:10.6px;">-11.73</span>
<span class="t" style="top:465.62px;letter-spacing:-0.250px;right:987.75px;font-size:10.6px;">-1.32</span>
<span class="t" style="top:465.62px;letter-spacing:-0.250px;right:939.15px;font-size:10.6px;">14.91</span>
<span class="t" style="top:465.62px;letter-spacing:-0.250px;right:839.55px;font-size:10.6px;">+2</span>
<span class="t" style="top:481.48px;letter-spacing:-0.250px;right:1036.45px;font-size:10.6px;">-10.87</span>
<span class="t" style="top:481.48px;letter-spacing:-0.250px;right:987.75px;font-size:10.6px;">-1.28</span>
<span class="t" style="top:497.32px;letter-spacing:-0.250px;right:1036.45px;font-size:10.6px;">-10.09</span>
<span class="t" style="top:497.32px;letter-spacing:-0.250px;right:987.75px;font-size:10.6px;">-1.24</span>
<span class="t" style="top:513.17px;letter-spacing:-0.250px;right:1036.45px;font-size:10.6px;">-9.39</span>
<span class="t" style="top:513.17px;letter-spacing:-0.250px;right:987.75px;font-size:10.6px;">-1.20</span>
<span class="t" style="top:529.02px;letter-spacing:-0.250px;right:1036.45px;font-size:10.6px;">-8.74</span>
<span class="t" style="top:529.02px;letter-spacing:-0.250px;right:987.75px;font-size:10.6px;">-1.16</span>
<span class="t" style="top:544.88px;letter-spacing:-0.250px;right:1036.45px;font-size:10.6px;">-8.14</span>
<span class="t" style="top:544.88px;letter-spacing:-0.250px;right:987.75px;font-size:10.6px;">-1.12</span>
<span class="t" style="top:560.73px;letter-spacing:-0.250px;right:1036.45px;font-size:10.6px;">-7.58</span>
<span class="t" style="top:560.73px;letter-spacing:-0.250px;right:987.75px;font-size:10.6px;">-1.09</span>
<span class="t" style="top:576.57px;letter-spacing:-0.250px;right:1036.45px;font-size:10.6px;">-5.08</span>
<span class="t" style="top:576.57px;letter-spacing:-0.250px;right:987.75px;font-size:10.6px;">-0.72</span>
<div style="position:absolute;left:247px;top:319.6px;width:295.3px;height:273.4px;background:#fff;border:1px solid #b4bccf;box-sizing:border-box;"></div>
<div style="position:absolute;left:248px;top:319.6px;width:293.3px;height:17.2px;background:#f3f5fa;"></div>
<div style="position:absolute;left:248px;top:337.3px;width:279px;height:15.85px;background:#a8c0e0;"></div>
<div style="position:absolute;left:248px;top:352px;width:279px;height:1px;background:rgba(176,160,200,.3);"></div>
<div style="position:absolute;left:248px;top:353.15px;width:279px;height:15.85px;background:#a8c0e0;"></div>
<div style="position:absolute;left:248px;top:368px;width:279px;height:1px;background:rgba(176,160,200,.3);"></div>
<div style="position:absolute;left:248px;top:369px;width:279px;height:15.85px;background:#d2d2d2;"></div>
<div style="position:absolute;left:248px;top:384px;width:279px;height:1px;background:rgba(176,160,200,.3);"></div>
<div style="position:absolute;left:248px;top:384.85px;width:279px;height:15.85px;background:#c9e6ec;"></div>
<div style="position:absolute;left:248px;top:400px;width:279px;height:1px;background:rgba(176,160,200,.3);"></div>
<div style="position:absolute;left:248px;top:400.7px;width:279px;height:15.85px;background:#c9e6ec;"></div>
<div style="position:absolute;left:248px;top:416px;width:279px;height:1px;background:rgba(176,160,200,.3);"></div>
<div style="position:absolute;left:248px;top:416.55px;width:279px;height:15.85px;background:#fffbee;"></div>
<div style="position:absolute;left:248px;top:432px;width:279px;height:1px;background:rgba(176,160,200,.3);"></div>
<div style="position:absolute;left:248px;top:432.4px;width:279px;height:15.85px;background:#c9e6ec;"></div>
<div style="position:absolute;left:248px;top:447px;width:279px;height:1px;background:rgba(176,160,200,.3);"></div>
<div style="position:absolute;left:248px;top:448.25px;width:279px;height:15.85px;background:#c9e6ec;"></div>
<div style="position:absolute;left:248px;top:463px;width:279px;height:1px;background:rgba(176,160,200,.3);"></div>
<div style="position:absolute;left:248px;top:464.1px;width:279px;height:15.85px;background:#c9e6ec;"></div>
<div style="position:absolute;left:248px;top:479px;width:279px;height:1px;background:rgba(176,160,200,.3);"></div>
<div style="position:absolute;left:248px;top:479.95px;width:279px;height:15.85px;background:#c9e6ec;"></div>
<div style="position:absolute;left:248px;top:495px;width:279px;height:1px;background:rgba(176,160,200,.3);"></div>
<div style="position:absolute;left:248px;top:495.8px;width:279px;height:15.85px;background:#c9e6ec;"></div>
<div style="position:absolute;left:248px;top:511px;width:279px;height:1px;background:rgba(176,160,200,.3);"></div>
<div style="position:absolute;left:248px;top:511.65px;width:279px;height:15.85px;background:#c9e6ec;"></div>
<div style="position:absolute;left:248px;top:527px;width:279px;height:1px;background:rgba(176,160,200,.3);"></div>
<div style="position:absolute;left:248px;top:527.5px;width:279px;height:15.85px;background:#c9e6ec;"></div>
<div style="position:absolute;left:248px;top:542px;width:279px;height:1px;background:rgba(176,160,200,.3);"></div>
<div style="position:absolute;left:248px;top:543.35px;width:279px;height:15.85px;background:#c9e6ec;"></div>
<div style="position:absolute;left:248px;top:558px;width:279px;height:1px;background:rgba(176,160,200,.3);"></div>
<div style="position:absolute;left:248px;top:559.2px;width:279px;height:15.85px;background:#ffffff;"></div>
<div style="position:absolute;left:248px;top:574px;width:279px;height:1px;background:#d3d7e3;"></div>
<div style="position:absolute;left:248px;top:575.05px;width:279px;height:15.85px;background:#ffffff;"></div>
<div style="position:absolute;left:248px;top:590px;width:279px;height:1px;background:#d3d7e3;"></div>
<div style="position:absolute;left:248px;top:590.9px;width:279px;height:1.1px;background:#ffffff;"></div>
<div style="position:absolute;left:293px;top:319.6px;width:1px;height:17.2px;background:#d3d7e3;"></div>
<div style="position:absolute;left:293px;top:337.3px;width:1px;height:254.7px;background:rgba(176,160,200,.3);"></div>
<div style="position:absolute;left:293px;top:559.2px;width:1px;height:32.8px;background:#d3d7e3;"></div>
<div style="position:absolute;left:339px;top:319.6px;width:1px;height:17.2px;background:#d3d7e3;"></div>
<div style="position:absolute;left:339px;top:337.3px;width:1px;height:254.7px;background:rgba(176,160,200,.3);"></div>
<div style="position:absolute;left:339px;top:559.2px;width:1px;height:32.8px;background:#d3d7e3;"></div>
<div style="position:absolute;left:385px;top:319.6px;width:1px;height:17.2px;background:#d3d7e3;"></div>
<div style="position:absolute;left:385px;top:337.3px;width:1px;height:254.7px;background:rgba(176,160,200,.3);"></div>
<div style="position:absolute;left:385px;top:559.2px;width:1px;height:32.8px;background:#d3d7e3;"></div>
<div style="position:absolute;left:431px;top:319.6px;width:1px;height:17.2px;background:#d3d7e3;"></div>
<div style="position:absolute;left:431px;top:337.3px;width:1px;height:254.7px;background:rgba(176,160,200,.3);"></div>
<div style="position:absolute;left:431px;top:559.2px;width:1px;height:32.8px;background:#d3d7e3;"></div>
<div style="position:absolute;left:477px;top:319.6px;width:1px;height:17.2px;background:#d3d7e3;"></div>
<div style="position:absolute;left:477px;top:337.3px;width:1px;height:254.7px;background:rgba(176,160,200,.3);"></div>
<div style="position:absolute;left:477px;top:559.2px;width:1px;height:32.8px;background:#d3d7e3;"></div>
<div style="position:absolute;left:527px;top:319.6px;width:1px;height:17.2px;background:#d3d7e3;"></div>
<div style="position:absolute;left:527px;top:337.3px;width:1px;height:254.7px;background:rgba(176,160,200,.3);"></div>
<div style="position:absolute;left:527px;top:559.2px;width:1px;height:32.8px;background:#d3d7e3;"></div>
<span class="t" style="top:321.2px;letter-spacing:-1.018px;left:269.64px;transform:translateX(-50%);font-size:10.2px;color:#3a3a3a;">Mid</span>
<span class="t" style="top:321.2px;letter-spacing:-0.453px;left:316.17px;transform:translateX(-50%);font-size:10.2px;color:#3a3a3a;">Delta</span>
<span class="t" style="top:321.2px;letter-spacing:-0.171px;left:362.41px;transform:translateX(-50%);font-size:10.2px;color:#3a3a3a;">Theta</span>
<span class="t" style="top:321.2px;letter-spacing:-0.576px;left:408.11px;transform:translateX(-50%);font-size:10.2px;color:#3a3a3a;">OrigPrice</span>
<span class="t" style="top:321.2px;letter-spacing:-0.370px;left:454.16px;transform:translateX(-50%);font-size:10.2px;color:#3a3a3a;">Model</span>
<span class="t" style="top:321.2px;letter-spacing:-1.188px;left:501.86px;transform:translateX(-50%);font-size:10.2px;color:#3a3a3a;">Pos</span>
<span class="t" style="top:338.82px;letter-spacing:-0.250px;right:789.85px;font-size:10.6px;color:#e8262a;">45.15</span>
<span class="t" style="top:338.82px;letter-spacing:-0.250px;right:743.65px;font-size:10.6px;">-22.11</span>
<span class="t" style="top:338.82px;letter-spacing:-0.250px;right:697.65px;font-size:10.6px;">-1.59</span>
<span class="t" style="top:354.68px;letter-spacing:-0.250px;right:789.85px;font-size:10.6px;color:#e8262a;">41.90</span>
<span class="t" style="top:354.68px;letter-spacing:-0.250px;right:743.65px;font-size:10.6px;">-20.48</span>
<span class="t" style="top:354.68px;letter-spacing:-0.250px;right:697.65px;font-size:10.6px;">-1.57</span>
<span class="t" style="top:370.52px;letter-spacing:-0.250px;right:789.85px;font-size:10.6px;color:#e8262a;">38.75</span>
<span class="t" style="top:370.52px;letter-spacing:-0.250px;right:743.65px;font-size:10.6px;">-18.94</span>
<span class="t" style="top:370.52px;letter-spacing:-0.250px;right:697.65px;font-size:10.6px;">-1.54</span>
<span class="t" style="top:386.38px;letter-spacing:-0.250px;right:789.85px;font-size:10.6px;color:#e8262a;">35.95</span>
<span class="t" style="top:386.38px;letter-spacing:-0.250px;right:743.65px;font-size:10.6px;">-17.54</span>
<span class="t" style="top:386.38px;letter-spacing:-0.250px;right:697.65px;font-size:10.6px;">-1.51</span>
<span class="t" style="top:402.22px;letter-spacing:-0.250px;right:789.85px;font-size:10.6px;color:#e8262a;">33.35</span>
<span class="t" style="top:402.22px;letter-spacing:-0.250px;right:743.65px;font-size:10.6px;">-16.24</span>
<span class="t" style="top:402.22px;letter-spacing:-0.250px;right:697.65px;font-size:10.6px;">-1.47</span>
<span class="t" style="top:418.07px;letter-spacing:-0.250px;right:789.85px;font-size:10.6px;color:#e8262a;">30.95</span>
<span class="t" style="top:418.07px;letter-spacing:-0.250px;right:743.65px;font-size:10.6px;">-15.05</span>
<span class="t" style="top:418.07px;letter-spacing:-0.250px;right:697.65px;font-size:10.6px;">-1.43</span>
<span class="t" style="top:433.92px;letter-spacing:-0.250px;right:789.85px;font-size:10.6px;color:#e8262a;">28.80</span>
<span class="t" style="top:433.92px;letter-spacing:-0.250px;right:743.65px;font-size:10.6px;">-13.97</span>
<span class="t" style="top:433.92px;letter-spacing:-0.250px;right:697.65px;font-size:10.6px;">-1.40</span>
<span class="t" style="top:449.77px;letter-spacing:-0.250px;right:789.85px;font-size:10.6px;color:#e8262a;">26.80</span>
<span class="t" style="top:449.77px;letter-spacing:-0.250px;right:743.65px;font-size:10.6px;">-12.96</span>
<span class="t" style="top:449.77px;letter-spacing:-0.250px;right:697.65px;font-size:10.6px;">-1.36</span>
<span class="t" style="top:465.62px;letter-spacing:-0.250px;right:789.85px;font-size:10.6px;color:#e8262a;">24.95</span>
<span class="t" style="top:465.62px;letter-spacing:-0.250px;right:743.65px;font-size:10.6px;">-12.03</span>
<span class="t" style="top:465.62px;letter-spacing:-0.250px;right:697.65px;font-size:10.6px;">-1.32</span>
<span class="t" style="top:481.48px;letter-spacing:-0.250px;right:789.85px;font-size:10.6px;color:#e8262a;">23.30</span>
<span class="t" style="top:481.48px;letter-spacing:-0.250px;right:743.65px;font-size:10.6px;">-11.19</span>
<span class="t" style="top:481.48px;letter-spacing:-0.250px;right:697.65px;font-size:10.6px;">-1.28</span>
<span class="t" style="top:497.32px;letter-spacing:-0.250px;right:789.85px;font-size:10.6px;color:#e8262a;">21.70</span>
<span class="t" style="top:497.32px;letter-spacing:-0.250px;right:743.65px;font-size:10.6px;">-10.40</span>
<span class="t" style="top:497.32px;letter-spacing:-0.250px;right:697.65px;font-size:10.6px;">-1.24</span>
<span class="t" style="top:513.17px;letter-spacing:-0.250px;right:789.85px;font-size:10.6px;color:#e8262a;">20.30</span>
<span class="t" style="top:513.17px;letter-spacing:-0.250px;right:743.65px;font-size:10.6px;">-9.68</span>
<span class="t" style="top:513.17px;letter-spacing:-0.250px;right:697.65px;font-size:10.6px;">-1.20</span>
<span class="t" style="top:529.02px;letter-spacing:-0.250px;right:789.85px;font-size:10.6px;color:#e8262a;">19.00</span>
<span class="t" style="top:529.02px;letter-spacing:-0.250px;right:743.65px;font-size:10.6px;">-9.02</span>
<span class="t" style="top:529.02px;letter-spacing:-0.250px;right:697.65px;font-size:10.6px;">-1.17</span>
<span class="t" style="top:544.88px;letter-spacing:-0.250px;right:789.85px;font-size:10.6px;color:#e8262a;">17.80</span>
<span class="t" style="top:544.88px;letter-spacing:-0.250px;right:743.65px;font-size:10.6px;">-8.42</span>
<span class="t" style="top:544.88px;letter-spacing:-0.250px;right:697.65px;font-size:10.6px;">-1.13</span>
<span class="t" style="top:560.73px;letter-spacing:-0.250px;right:789.85px;font-size:10.6px;color:#e8262a;">16.70</span>
<span class="t" style="top:560.73px;letter-spacing:-0.250px;right:743.65px;font-size:10.6px;">-7.86</span>
<span class="t" style="top:560.73px;letter-spacing:-0.250px;right:697.65px;font-size:10.6px;">-1.09</span>
<span class="t" style="top:576.57px;letter-spacing:-0.250px;right:789.85px;font-size:10.6px;color:#e8262a;">15.60</span>
<span class="t" style="top:576.57px;letter-spacing:-0.250px;right:743.65px;font-size:10.6px;">-7.32</span>
<span class="t" style="top:576.57px;letter-spacing:-0.250px;right:697.65px;font-size:10.6px;">-1.05</span>
<div style="position:absolute;left:145.3px;top:417.55px;width:45.5px;height:13.15px;background:#fff3b0;"></div>
<div style="position:absolute;left:190px;top:418.55px;width:1px;height:11.15px;background:#444;"></div>
<div style="position:absolute;left:527px;top:245px;width:14.3px;height:62.5px;background:#d2d7e6;"></div>
<svg style="left:530.5px;top:250px" width="8" height="6" viewBox="0 0 8 6"><path d="M1 4.5L4 1.5L7 4.5Z" fill="#555c6e"/></svg>
<svg style="left:530.5px;top:297.0px" width="8" height="6" viewBox="0 0 8 6"><path d="M1 1.5L4 4.5L7 1.5Z" fill="#555c6e"/></svg>
<div style="position:absolute;left:529.8px;top:264px;width:8.6px;height:14.3px;background:#8f98ae;"></div>
<div style="position:absolute;left:527px;top:337px;width:14.3px;height:255px;background:#d2d7e6;"></div>
<svg style="left:530.5px;top:342px" width="8" height="6" viewBox="0 0 8 6"><path d="M1 4.5L4 1.5L7 4.5Z" fill="#555c6e"/></svg>
<svg style="left:530.5px;top:581.5px" width="8" height="6" viewBox="0 0 8 6"><path d="M1 1.5L4 4.5L7 1.5Z" fill="#555c6e"/></svg>
<div style="position:absolute;left:529.8px;top:437px;width:8.6px;height:17px;background:#8f98ae;"></div>
<div style="position:absolute;left:527px;top:228px;width:14.6px;height:17px;background:#f3f5fa;border-left:1px solid #d3d7e3;box-sizing:border-box;"></div>
<div style="position:absolute;left:527px;top:319.8px;width:14.6px;height:17px;background:#f3f5fa;border-left:1px solid #d3d7e3;box-sizing:border-box;"></div>
<div style="position:absolute;left:-20px;top:605.6px;width:115px;height:15px;background:#fff;border:1px solid #b9c1d4;"></div>
<span class="t" style="top:608.3px;letter-spacing:0.120px;right:1063.78px;font-size:10.4px;">Combined</span>
<svg style="left:84.5px;top:610.5px" width="8" height="6" viewBox="0 0 8 6"><path d="M1.9 1.7H6.1L4 4.3Z" fill="#5c6070"/></svg>
<div style="position:absolute;left:104px;top:605.6px;width:66.5px;height:15px;background:#fff;border:1px solid #b9c1d4;"></div>
<span class="t" style="top:608.3px;letter-spacing:-0.465px;left:107.5px;font-size:10.4px;">Auto</span>
<svg style="left:160px;top:610.5px" width="8" height="6" viewBox="0 0 8 6"><path d="M1.9 1.7H6.1L4 4.3Z" fill="#5c6070"/></svg>
<div style="position:absolute;left:423px;top:605.5px;width:120px;height:17px;background:#dadfeb;"></div>
<div style="position:absolute;left:424.3px;top:608.8px;width:8px;height:8px;background:#fff;border:1px solid #aeb6c8;"></div>
<span class="t" style="top:607.2px;letter-spacing:0.050px;left:436.6px;font-size:10.5px;">Ignore Today&#x27;s Trades</span>
<div style="position:absolute;left:-20px;top:625.7px;width:562.6px;height:60px;background:#fff;border:1px solid #b4bccf;box-sizing:border-box;"></div>
<div style="position:absolute;left:-19px;top:626.7px;width:560.6px;height:17px;background:#f3f5fa;border-bottom:1px solid #d3d7e3;box-sizing:border-box;"></div>
<div style="position:absolute;left:-19px;top:659px;width:560.6px;height:1px;background:#d3d7e3;"></div>
<div style="position:absolute;left:39px;top:626.7px;width:1px;height:58px;background:#d3d7e3;"></div>
<span class="t" style="top:628.4px;left:14.8px;transform:translateX(-50%);font-size:10.2px;color:#3a3a3a;">Cost</span>
<div style="position:absolute;left:88px;top:626.7px;width:1px;height:58px;background:#d3d7e3;"></div>
<span class="t" style="top:628.4px;left:64px;transform:translateX(-50%);font-size:10.2px;color:#3a3a3a;">Curr Cost</span>
<div style="position:absolute;left:138px;top:626.7px;width:1px;height:58px;background:#d3d7e3;"></div>
<span class="t" style="top:628.4px;left:113.35px;transform:translateX(-50%);font-size:10.2px;color:#3a3a3a;">Commi...</span>
<div style="position:absolute;left:188px;top:626.7px;width:1px;height:58px;background:#d3d7e3;"></div>
<span class="t" style="top:628.4px;left:163.1px;transform:translateX(-50%);font-size:10.2px;color:#3a3a3a;">PnL</span>
<div style="position:absolute;left:237px;top:626.7px;width:1px;height:58px;background:#d3d7e3;"></div>
<span class="t" style="top:628.4px;left:212.85px;transform:translateX(-50%);font-size:10.2px;color:#3a3a3a;">PnL%</span>
<div style="position:absolute;left:287px;top:626.7px;width:1px;height:58px;background:#d3d7e3;"></div>
<span class="t" style="top:628.4px;left:262.75px;transform:translateX(-50%);font-size:10.2px;color:#3a3a3a;">Delta</span>
<div style="position:absolute;left:336px;top:626.7px;width:1px;height:58px;background:#d3d7e3;"></div>
<span class="t" style="top:628.4px;left:312.2px;transform:translateX(-50%);font-size:10.2px;color:#3a3a3a;">Gamma</span>
<div style="position:absolute;left:386px;top:626.7px;width:1px;height:58px;background:#d3d7e3;"></div>
<span class="t" style="top:628.4px;left:361.3px;transform:translateX(-50%);font-size:10.2px;color:#3a3a3a;">Theta</span>
<div style="position:absolute;left:435px;top:626.7px;width:1px;height:58px;background:#d3d7e3;"></div>
<span class="t" style="top:628.4px;left:410.6px;transform:translateX(-50%);font-size:10.2px;color:#3a3a3a;">Vega</span>
<div style="position:absolute;left:485px;top:626.7px;width:1px;height:58px;background:#d3d7e3;"></div>
<span class="t" style="top:628.4px;left:460.1px;transform:translateX(-50%);font-size:10.2px;color:#3a3a3a;">T/D</span>
<span class="t" style="top:628.4px;left:513.8px;transform:translateX(-50%);font-size:10.2px;color:#3a3a3a;">Plot</span>
<span class="t" style="top:645.4px;letter-spacing:-0.250px;right:1043.65px;font-size:10.6px;">914.42</span>
<span class="t" style="top:645.4px;letter-spacing:-0.250px;right:994.65px;font-size:10.6px;">-1,400.00</span>
<span class="t" style="top:645.4px;letter-spacing:-0.250px;right:944.95px;font-size:10.6px;">5.60</span>
<span class="t" style="top:645.4px;letter-spacing:-0.250px;right:895.15px;font-size:10.6px;color:#e8262a;">-485.58</span>
<span class="t" style="top:645.4px;letter-spacing:-0.250px;right:845.45px;font-size:10.6px;color:#e8262a;">-2.54%</span>
<span class="t" style="top:645.4px;letter-spacing:-0.250px;right:795.35px;font-size:10.6px;">7.31</span>
<span class="t" style="top:645.4px;letter-spacing:-0.250px;right:746.55px;font-size:10.6px;">-0.03</span>
<span class="t" style="top:645.4px;letter-spacing:-0.250px;right:697.15px;font-size:10.6px;">33.47</span>
<span class="t" style="top:645.4px;letter-spacing:-0.250px;right:647.95px;font-size:10.6px;">-155.88</span>
<span class="t" style="top:645.4px;letter-spacing:-0.250px;right:598.15px;font-size:10.6px;">4.6</span>
<svg style="left:509.29999999999995px;top:647.0px" width="10" height="10" viewBox="0 0 10 10"><rect x=".5" y=".5" width="8.4" height="8.4" fill="#fff" stroke="#aeb6c8" stroke-width=".9"/><path d="M2.2 4.6L4 6.6L7.2 2.4" fill="none" stroke="#5e6478" stroke-width="1.1"/></svg>
<span class="t" style="top:661.3px;letter-spacing:-0.250px;right:1043.65px;font-size:10.6px;">398.02</span>
<span class="t" style="top:661.3px;letter-spacing:-0.250px;right:994.65px;font-size:10.6px;">-885.00</span>
<span class="t" style="top:661.3px;letter-spacing:-0.250px;right:944.95px;font-size:10.6px;">7.00</span>
<span class="t" style="top:661.3px;letter-spacing:-0.250px;right:895.15px;font-size:10.6px;color:#e8262a;">-486.98</span>
<span class="t" style="top:661.3px;letter-spacing:-0.250px;right:845.45px;font-size:10.6px;color:#e8262a;">-3.33%</span>
<span class="t" style="top:661.3px;letter-spacing:-0.250px;right:795.35px;font-size:10.6px;">4.65</span>
<span class="t" style="top:661.3px;letter-spacing:-0.250px;right:746.55px;font-size:10.6px;">-0.02</span>
<span class="t" style="top:661.3px;letter-spacing:-0.250px;right:697.15px;font-size:10.6px;">26.74</span>
<span class="t" style="top:661.3px;letter-spacing:-0.250px;right:647.95px;font-size:10.6px;">-111.47</span>
<span class="t" style="top:661.3px;letter-spacing:-0.250px;right:598.15px;font-size:10.6px;">5.8</span>
<svg style="left:509.29999999999995px;top:662.9px" width="10" height="10" viewBox="0 0 10 10"><rect x=".5" y=".5" width="8.4" height="8.4" fill="#fff" stroke="#aeb6c8" stroke-width=".9"/><path d="M2.2 4.6L4 6.6L7.2 2.4" fill="none" stroke="#5e6478" stroke-width="1.1"/></svg>
<svg style="left:545px;top:400px" width="6" height="14" viewBox="0 0 6 14"><g fill="#a6aec2"><circle cx="1.5" cy="1.5" r=".6"/><circle cx="1.5" cy="4.5" r=".6"/><circle cx="1.5" cy="7.5" r=".6"/><circle cx="1.5" cy="10.5" r=".6"/><circle cx="3.5" cy="3" r=".6"/><circle cx="3.5" cy="6" r=".6"/><circle cx="3.5" cy="9" r=".6"/><circle cx="3.5" cy="12" r=".6"/></g></svg>
<div style="position:absolute;left:553px;top:137.2px;width:1px;height:520px;background:#b0b8cc;"></div>
<div style="position:absolute;left:553.5px;top:160px;width:527px;height:1px;background:#b0b8cc;"></div>
<div style="position:absolute;left:553px;top:138.3px;width:66px;height:22.7px;background:#d6dbe9;border:1px solid #b0b8cc;border-bottom:none;box-sizing:border-box;"></div>
<span class="t" style="top:142.9px;letter-spacing:-0.286px;left:585.86px;transform:translateX(-50%);font-size:10.15px;color:#1e1e1e;">Risk Chart</span>
<div style="position:absolute;left:618px;top:138.3px;width:68px;height:22.5px;background:#cdd3e4;border:1px solid #b0b8cc;box-sizing:border-box;"></div>
<span class="t" style="top:142.9px;letter-spacing:-0.207px;left:652.4px;transform:translateX(-50%);font-size:10.15px;color:#1e1e1e;">Price Chart</span>
<div style="position:absolute;left:685px;top:138.3px;width:107px;height:22.5px;background:#cdd3e4;border:1px solid #b0b8cc;box-sizing:border-box;"></div>
<span class="t" style="top:142.9px;letter-spacing:-0.065px;left:738.97px;transform:translateX(-50%);font-size:10.15px;color:#1e1e1e;">Movement Analysis</span>
<div style="position:absolute;left:791px;top:138.3px;width:55px;height:22.5px;background:#cdd3e4;border:1px solid #b0b8cc;box-sizing:border-box;"></div>
<span class="t" style="top:142.9px;letter-spacing:-0.215px;left:818.89px;transform:translateX(-50%);font-size:10.15px;color:#1e1e1e;">Volatility</span>
<div style="position:absolute;left:845px;top:138.3px;width:135px;height:22.5px;background:#cdd3e4;border:1px solid #b0b8cc;box-sizing:border-box;"></div>
<span class="t" style="top:142.9px;letter-spacing:-0.102px;left:912.95px;transform:translateX(-50%);font-size:10.15px;color:#1e1e1e;">Statistics &amp; Fundamentals</span>
<span class="t" style="top:165.3px;letter-spacing:-0.033px;left:559px;font-size:10.2px;">Vol Adjust</span>
<div style="position:absolute;left:608px;top:163.3px;width:42.5px;height:15.2px;background:#fff;border:1px solid #b9c1d4;"></div>
<span class="t" style="top:165.3px;right:443.7px;font-size:10.6px;">0</span>
<svg style="left:640.6px;top:165px" width="8" height="13" viewBox="0 0 8 13"><path d="M1.5 3.8L4 1.3L6.5 3.8Z M1.5 8.2L4 10.7L6.5 8.2Z" fill="#444"/></svg>
<span class="t" style="top:165.3px;letter-spacing:-0.251px;left:985.1px;font-size:10.2px;">Projection</span>
<div style="position:absolute;left:1031.8px;top:163.3px;width:60px;height:15.2px;background:#fff;border:1px solid #b9c1d4;"></div>
<span class="t" style="top:164.7px;letter-spacing:-0.100px;left:1034.7px;font-size:10.6px;">02/09/2025</span>
<svg style="left:554px;top:182px" width="526" height="472" viewBox="554 182 526 472"><rect x="554" y="182" width="526" height="472" fill="#fff"/><path d="M601 474.5H1080M601 458.5H1080M601 441.5H1080M601 425.5H1080M601 408.5H1080M601 392.5H1080M601 376.5H1080M601 360.5H1080M601 343.5H1080M601 327.5H1080M601 311.5H1080M601 295.5H1080M601 278.5H1080M601 262.5H1080M601 246.5H1080M601 230.5H1080M601 214.5H1080M601 197.5H1080M619.5 197.9V474.6M665.5 197.9V474.6M710.5 197.9V474.6M755.5 197.9V474.6M801.5 197.9V474.6M846.5 197.9V474.6M892.5 197.9V474.6M937.5 197.9V474.6M982.5 197.9V474.6M1028.5 197.9V474.6M1073.5 197.9V474.6" stroke="#e4e4e8" stroke-width="1" fill="none"/><path d="M601.5 197.9V474.6" stroke="#dedee2" stroke-width="1" fill="none"/><rect x="870.3" y="197.9" width="153.9" height="276.7" fill="#92cddc"/><rect x="908.8" y="197.9" width="77.0" height="276.7" fill="#4f81bd"/><path d="M870.3 474.5H1024.2M870.3 458.5H1024.2M870.3 441.5H1024.2M870.3 425.5H1024.2M870.3 408.5H1024.2M870.3 392.5H1024.2M870.3 376.5H1024.2M870.3 360.5H1024.2M870.3 343.5H1024.2M870.3 327.5H1024.2M870.3 311.5H1024.2M870.3 295.5H1024.2M870.3 278.5H1024.2M870.3 262.5H1024.2M870.3 246.5H1024.2M870.3 230.5H1024.2M870.3 214.5H1024.2M870.3 197.5H1024.2M892.5 197.9V474.6M937.5 197.9V474.6M982.5 197.9V474.6" stroke="#fff" stroke-opacity=".45" stroke-width="1" fill="none"/><text transform="translate(880.1 232.3) rotate(-90) scale(0.87 1)" font-size="10.1" fill="#5e93cc">6375.92</text><text transform="translate(919.6 232.3) rotate(-90) scale(0.87 1)" font-size="10.1" fill="#a4c2e4">6418.09</text><text transform="translate(983.8 232.3) rotate(-90) scale(0.87 1)" font-size="10.1" fill="#a4c2e4">6502.43</text><text transform="translate(1022.9 232.3) rotate(-90) scale(0.87 1)" font-size="10.1" fill="#5e93cc">6544.61</text><text transform="translate(596.0 202.1) scale(0.870 1)" font-size="10.1" text-anchor="end" fill="#222">63%</text><text transform="translate(596.0 218.3) scale(0.870 1)" font-size="10.1" text-anchor="end" fill="#222">58%</text><text transform="translate(596.0 234.5) scale(0.870 1)" font-size="10.1" text-anchor="end" fill="#222">52%</text><text transform="translate(596.0 250.7) scale(0.870 1)" font-size="10.1" text-anchor="end" fill="#222">47%</text><text transform="translate(596.0 266.9) scale(0.870 1)" font-size="10.1" text-anchor="end" fill="#222">42%</text><text transform="translate(596.0 283.2) scale(0.870 1)" font-size="10.1" text-anchor="end" fill="#222">37%</text><text transform="translate(596.0 299.4) scale(0.870 1)" font-size="10.1" text-anchor="end" fill="#222">31%</text><text transform="translate(596.0 315.6) scale(0.870 1)" font-size="10.1" text-anchor="end" fill="#222">26%</text><text transform="translate(596.0 331.8) scale(0.870 1)" font-size="10.1" text-anchor="end" fill="#222">21%</text><text transform="translate(596.0 348.0) scale(0.870 1)" font-size="10.1" text-anchor="end" fill="#222">16%</text><text transform="translate(596.0 364.3) scale(0.870 1)" font-size="10.1" text-anchor="end" fill="#222">10%</text><text transform="translate(596.0 380.5) scale(0.870 1)" font-size="10.1" text-anchor="end" fill="#222">5%</text><text transform="translate(596.0 396.7) scale(0.870 1)" font-size="10.1" text-anchor="end" fill="#222">0%</text><text transform="translate(596.0 413.1) scale(0.870 1)" font-size="10.1" text-anchor="end" fill="#222">-5%</text><text transform="translate(596.0 429.5) scale(0.870 1)" font-size="10.1" text-anchor="end" fill="#222">-10%</text><text transform="translate(596.0 445.9) scale(0.870 1)" font-size="10.1" text-anchor="end" fill="#222">-16%</text><text transform="translate(596.0 462.3) scale(0.870 1)" font-size="10.1" text-anchor="end" fill="#222">-21%</text><text transform="translate(596.0 478.6) scale(0.870 1)" font-size="10.1" text-anchor="end" fill="#222">-26%</text><text transform="translate(620.0 193.8) scale(0.870 1)" font-size="10.1" text-anchor="middle" fill="#222">-5.6%</text><text transform="translate(620.0 487.8) scale(0.870 1)" font-size="10.1" text-anchor="middle" fill="#222">6100</text><text transform="translate(665.4 193.8) scale(0.870 1)" font-size="10.1" text-anchor="middle" fill="#222">-4.8%</text><text transform="translate(665.4 487.8) scale(0.870 1)" font-size="10.1" text-anchor="middle" fill="#222">6150</text><text transform="translate(710.8 193.8) scale(0.870 1)" font-size="10.1" text-anchor="middle" fill="#222">-4.0%</text><text transform="translate(710.8 487.8) scale(0.870 1)" font-size="10.1" text-anchor="middle" fill="#222">6200</text><text transform="translate(756.2 193.8) scale(0.870 1)" font-size="10.1" text-anchor="middle" fill="#222">-3.3%</text><text transform="translate(756.2 487.8) scale(0.870 1)" font-size="10.1" text-anchor="middle" fill="#222">6250</text><text transform="translate(801.6 193.8) scale(0.870 1)" font-size="10.1" text-anchor="middle" fill="#222">-2.5%</text><text transform="translate(801.6 487.8) scale(0.870 1)" font-size="10.1" text-anchor="middle" fill="#222">6300</text><text transform="translate(847.0 193.8) scale(0.870 1)" font-size="10.1" text-anchor="middle" fill="#222">-1.7%</text><text transform="translate(847.0 487.8) scale(0.870 1)" font-size="10.1" text-anchor="middle" fill="#222">6350</text><text transform="translate(892.4 193.8) scale(0.870 1)" font-size="10.1" text-anchor="middle" fill="#222">-0.9%</text><text transform="translate(892.4 487.8) scale(0.870 1)" font-size="10.1" text-anchor="middle" fill="#222">6400</text><text transform="translate(937.8 193.8) scale(0.870 1)" font-size="10.1" text-anchor="middle" fill="#222">-0.2%</text><text transform="translate(937.8 487.8) scale(0.870 1)" font-size="10.1" text-anchor="middle" fill="#222">6450</text><text transform="translate(983.2 193.8) scale(0.870 1)" font-size="10.1" text-anchor="middle" fill="#222">0.6%</text><text transform="translate(983.2 487.8) scale(0.870 1)" font-size="10.1" text-anchor="middle" fill="#222">6500</text><text transform="translate(1028.6 193.8) scale(0.870 1)" font-size="10.1" text-anchor="middle" fill="#222">1.4%</text><text transform="translate(1028.6 487.8) scale(0.870 1)" font-size="10.1" text-anchor="middle" fill="#222">6550</text><text transform="translate(1074.0 193.8) scale(0.870 1)" font-size="10.1" text-anchor="middle" fill="#222">2.2%</text><text transform="translate(1074.0 487.8) scale(0.870 1)" font-size="10.1" text-anchor="middle" fill="#222">6600</text><rect x="860.5" y="182.8" width="26.7" height="9.5" fill="#e9eef7" stroke="#3c4660" stroke-width=".8"/><text transform="translate(873.8 192.4) scale(0.870 1)" font-size="10.1" text-anchor="middle" fill="#222">-1.2%</text><path d="M601 392.5H1080" stroke="#4a4a4a" stroke-width="1"/><g fill="none" stroke-width="1.1"><path d="M601 436.3C630 428 680 414 710 408.7S800 396 840 392.5S900 388 937 384.6S1040 379 1080 378.3" stroke="#f06a6a"/><path d="M601 442C640 435 680 428 697.5 423.3S740 411 765 405S820 396 840 393.5S900 389.5 937 387.5S1040 385.5 1080 385" stroke="#f06a6a"/><path d="M601 460C640 446 670 433 697.5 423.3" stroke="#f06a6a"/><path d="M697.5 423.3C730 416 760 412.5 790 408.7S850 403 874 400.5S930 395 960 393S1040 390.5 1080 389.7" stroke="#6cc46c"/><path d="M601 462.5C650 448 700 434 742.5 423.8" stroke="#f06a6a"/><path d="M742.5 423.8C790 413 830 406 874 401S940 394 980 391S1050 386 1080 384.6" stroke="#8fb4ee"/></g><path d="M601 255.2L618.5 224.3L665.4 386H1080" fill="none" stroke="#148214" stroke-width="1.8" stroke-linejoin="miter"/><path d="M619.3 217.5L665.4 377.7H1080" fill="none" stroke="#5555cc" stroke-width="2" stroke-linejoin="miter"/><path d="M601 278L606 261.5" fill="none" stroke="#5555cc" stroke-width="1.1"/><path d="M601 280L617.5 224Q619.3 213 621.5 224L640 290" fill="none" stroke="#9db8ee" stroke-width=".9"/><path d="M865.8 402.6L893 397.4" stroke="#e0b48c" stroke-width="4.4" stroke-opacity=".72"/><circle cx="873.9" cy="401" r="2.9" fill="#e81010" stroke="#5a1010" stroke-width=".7"/><rect x="560" y="394.9" width="38" height="10.4" fill="#cc0000"/><text transform="translate(596.0 404.3) scale(0.870 1)" font-size="10.1" text-anchor="end" fill="#fff">-3%</text><rect x="605.6" y="202.3" width="138.8" height="82.2" rx="3.5" fill="#e6eaf2" fill-opacity=".9" stroke="#9aa3b6" stroke-width=".9"/><path d="M605.6 247L614.3 231.7" fill="none" stroke="#2a8a2a" stroke-width="1.6"/><path d="M614.3 231.7L618.5 223.6L636 284.5" fill="none" stroke="#86cc86" stroke-width="1"/><path d="M605.6 262.8L618.4 220" fill="none" stroke="#5a5ac8" stroke-width="1"/><path d="M618.4 220Q619.6 212 621.3 220L638.6 284.5" fill="none" stroke="#9db8ee" stroke-width="1"/><rect x="612.4" y="209.7" width="2.4" height="10.6" fill="#e83030"/><text transform="translate(615.8 218.4) scale(0.873 1)" font-size="10.1" text-anchor="start" fill="#555">-5.60 Realized PnL</text><rect x="612.4" y="221.4" width="2.4" height="10.6" fill="#3aa83a"/><text transform="translate(615.8 230.1) scale(0.870 1)" font-size="10.1" text-anchor="start" fill="#444">+1</text><text transform="translate(628.6 230.1) scale(0.893 1)" font-size="10.1" text-anchor="start" fill="#5a5af0">30sep. 6100 Put Δ</text><text transform="translate(737.6 230.1) scale(0.855 1)" font-size="10.1" text-anchor="end" fill="#5a5af0">-18.59</text><rect x="612.4" y="233.1" width="2.4" height="10.6" fill="#3aa83a"/><text transform="translate(615.8 241.8) scale(0.870 1)" font-size="10.1" text-anchor="start" fill="#444">-1</text><text transform="translate(625.9 241.8) scale(0.893 1)" font-size="10.1" text-anchor="start" fill="#f06464">30sep. 6050 Put Δ</text><text transform="translate(734.8 241.8) scale(0.855 1)" font-size="10.1" text-anchor="end" fill="#f06464">-15.93</text><rect x="612.4" y="244.9" width="2.4" height="10.6" fill="#8ea4ec"/><text transform="translate(615.8 253.6) scale(0.870 1)" font-size="10.1" text-anchor="start" fill="#444">+2</text><text transform="translate(628.6 253.6) scale(0.893 1)" font-size="10.1" text-anchor="start" fill="#5a5af0">30sep. 6150 Put Δ</text><text transform="translate(737.6 253.6) scale(0.855 1)" font-size="10.1" text-anchor="end" fill="#5a5af0">-21.80</text><rect x="612.4" y="256.6" width="2.4" height="10.6" fill="#8ea4ec"/><text transform="translate(615.8 265.3) scale(0.870 1)" font-size="10.1" text-anchor="start" fill="#444">+2</text><text transform="translate(628.6 265.3) scale(0.893 1)" font-size="10.1" text-anchor="start" fill="#5a5af0">30sep. 5950 Put Δ</text><text transform="translate(737.6 265.3) scale(0.878 1)" font-size="10.1" text-anchor="end" fill="#5a5af0">-11.73</text><rect x="612.4" y="268.3" width="2.4" height="10.6" fill="#8ea4ec"/><text transform="translate(615.8 277.0) scale(0.870 1)" font-size="10.1" text-anchor="start" fill="#444">-4</text><text transform="translate(625.9 277.0) scale(0.893 1)" font-size="10.1" text-anchor="start" fill="#f06464">30sep. 6100 Put Δ</text><text transform="translate(734.8 277.0) scale(0.855 1)" font-size="10.1" text-anchor="end" fill="#f06464">-18.59</text><rect x="606.3" y="423.6" width="96.6" height="47" rx="3.5" fill="#e6eaf2" fill-opacity=".85" stroke="#9aa3b6" stroke-width=".9"/><text transform="translate(612.8 440.1) scale(0.870 1)" font-size="10.1" text-anchor="start" fill="#5aa85a">30/09/2025 (0)</text><text transform="translate(612.8 451.9) scale(0.870 1)" font-size="10.1" text-anchor="start" fill="#f07070">16/09/2025 (14) T+14</text><text transform="translate(612.8 463.6) scale(0.870 1)" font-size="10.1" text-anchor="start" fill="#74d074">02/09/2025 (28) T+0</text><rect x="557.3" y="493.2" width="540" height="158.6" rx="3" fill="#e9eff9" stroke="#8f99ad" stroke-width=".9"/><text transform="translate(580.0 520.5) scale(0.870 1)" font-size="10.1" text-anchor="middle" fill="#555">PnL</text><text transform="translate(580.0 557.2) scale(0.870 1)" font-size="10.1" text-anchor="middle" fill="#555">Delta</text><text transform="translate(580.0 584.5) scale(0.870 1)" font-size="10.1" text-anchor="middle" fill="#555">Gamma</text><text transform="translate(580.0 611.5) scale(0.870 1)" font-size="10.1" text-anchor="middle" fill="#555">Theta</text><text transform="translate(580.0 639.5) scale(0.870 1)" font-size="10.1" text-anchor="middle" fill="#555">Vega</text><rect x="602.0" y="516.7" width="41.1" height="8.6" fill="#f0787c" stroke="#86525a" stroke-width=".8"/><rect x="643.1" y="516.7" width="45.5" height="6.8" fill="#f0787c" stroke="#86525a" stroke-width=".8"/><rect x="688.6" y="516.7" width="45.5" height="5.3" fill="#f0787c" stroke="#86525a" stroke-width=".8"/><rect x="734.1" y="516.7" width="45.5" height="4.0" fill="#f0787c" stroke="#86525a" stroke-width=".8"/><rect x="779.5" y="516.7" width="45.5" height="2.9" fill="#f0787c" stroke="#86525a" stroke-width=".8"/><rect x="825.0" y="516.7" width="45.5" height="2.0" fill="#f0787c" stroke="#86525a" stroke-width=".8"/><rect x="870.5" y="516.7" width="45.5" height="1.2" fill="#f0787c" stroke="#86525a" stroke-width=".8"/><rect x="916.0" y="516.7" width="45.5" height="0.8" fill="#f0787c" stroke="#86525a" stroke-width=".8"/><rect x="961.4" y="516.7" width="45.5" height="0.8" fill="#f0787c" stroke="#86525a" stroke-width=".8"/><rect x="1006.9" y="516.5" width="45.5" height="0.8" fill="#4f72f4" stroke="#34407a" stroke-width=".8"/><rect x="1052.4" y="516.2" width="29.6" height="0.8" fill="#4f72f4" stroke="#34407a" stroke-width=".8"/><text transform="translate(620.6 506.4) scale(0.870 1)" font-size="10.1" text-anchor="middle" fill="#f06464">-14%</text><text transform="translate(666.1 506.4) scale(0.870 1)" font-size="10.1" text-anchor="middle" fill="#f06464">-11%</text><text transform="translate(711.5 506.4) scale(0.870 1)" font-size="10.1" text-anchor="middle" fill="#f06464">-9%</text><text transform="translate(757.0 506.4) scale(0.870 1)" font-size="10.1" text-anchor="middle" fill="#f06464">-7%</text><text transform="translate(802.5 506.4) scale(0.870 1)" font-size="10.1" text-anchor="middle" fill="#f06464">-5%</text><text transform="translate(848.0 506.4) scale(0.870 1)" font-size="10.1" text-anchor="middle" fill="#f06464">-3%</text><text transform="translate(893.4 506.4) scale(0.870 1)" font-size="10.1" text-anchor="middle" fill="#f06464">-2%</text><text transform="translate(938.9 506.4) scale(0.870 1)" font-size="10.1" text-anchor="middle" fill="#f06464">-1%</text><text transform="translate(984.4 506.4) scale(0.870 1)" font-size="10.1" text-anchor="middle" fill="#f06464">0%</text><text transform="translate(620.6 517.0) scale(0.870 1)" font-size="10.1" text-anchor="middle" fill="#f06464">-2763</text><text transform="translate(666.1 517.0) scale(0.870 1)" font-size="10.1" text-anchor="middle" fill="#f06464">-2194</text><text transform="translate(711.5 517.0) scale(0.870 1)" font-size="10.1" text-anchor="middle" fill="#f06464">-1700</text><text transform="translate(757.0 517.0) scale(0.870 1)" font-size="10.1" text-anchor="middle" fill="#f06464">-1278</text><text transform="translate(802.5 517.0) scale(0.870 1)" font-size="10.1" text-anchor="middle" fill="#f06464">-925</text><text transform="translate(848.0 517.0) scale(0.870 1)" font-size="10.1" text-anchor="middle" fill="#f06464">-633</text><text transform="translate(893.4 517.0) scale(0.870 1)" font-size="10.1" text-anchor="middle" fill="#f06464">-396</text><text transform="translate(938.9 517.0) scale(0.870 1)" font-size="10.1" text-anchor="middle" fill="#f06464">-206</text><text transform="translate(984.4 517.0) scale(0.870 1)" font-size="10.1" text-anchor="middle" fill="#f06464">-55</text><text transform="translate(1029.8 525.2) scale(0.870 1)" font-size="10.1" text-anchor="middle" fill="#5a6af0">62</text><text transform="translate(1075.3 525.2) scale(0.870 1)" font-size="10.1" text-anchor="middle" fill="#5a6af0">152</text><text transform="translate(1029.8 533.9) scale(0.870 1)" font-size="10.1" text-anchor="middle" fill="#5a6af0">0%</text><text transform="translate(1075.3 533.9) scale(0.870 1)" font-size="10.1" text-anchor="middle" fill="#5a6af0">1%</text><rect x="602.0" y="544.1" width="41.1" height="8.2" fill="#4f72f4" stroke="#34407a" stroke-width=".8"/><rect x="643.1" y="545.1" width="45.5" height="7.2" fill="#4f72f4" stroke="#34407a" stroke-width=".8"/><rect x="688.6" y="546.1" width="45.5" height="6.2" fill="#4f72f4" stroke="#34407a" stroke-width=".8"/><rect x="734.1" y="547.1" width="45.5" height="5.2" fill="#4f72f4" stroke="#34407a" stroke-width=".8"/><rect x="779.5" y="548.0" width="45.5" height="4.3" fill="#4f72f4" stroke="#34407a" stroke-width=".8"/><rect x="825.0" y="548.7" width="45.5" height="3.6" fill="#4f72f4" stroke="#34407a" stroke-width=".8"/><rect x="870.5" y="549.4" width="45.5" height="2.9" fill="#4f72f4" stroke="#34407a" stroke-width=".8"/><rect x="916.0" y="550.0" width="45.5" height="2.3" fill="#4f72f4" stroke="#34407a" stroke-width=".8"/><rect x="961.4" y="550.5" width="45.5" height="1.8" fill="#4f72f4" stroke="#34407a" stroke-width=".8"/><rect x="1006.9" y="550.9" width="45.5" height="1.4" fill="#4f72f4" stroke="#34407a" stroke-width=".8"/><rect x="1052.4" y="551.2" width="29.6" height="1.1" fill="#4f72f4" stroke="#34407a" stroke-width=".8"/><text transform="translate(620.6 561.7) scale(0.870 1)" font-size="10.1" text-anchor="middle" fill="#5a6af0">12.15</text><text transform="translate(666.1 561.7) scale(0.870 1)" font-size="10.1" text-anchor="middle" fill="#5a6af0">10.63</text><text transform="translate(711.5 561.7) scale(0.870 1)" font-size="10.1" text-anchor="middle" fill="#5a6af0">9.14</text><text transform="translate(757.0 561.7) scale(0.870 1)" font-size="10.1" text-anchor="middle" fill="#5a6af0">7.73</text><text transform="translate(802.5 561.7) scale(0.870 1)" font-size="10.1" text-anchor="middle" fill="#5a6af0">6.43</text><text transform="translate(848.0 561.7) scale(0.870 1)" font-size="10.1" text-anchor="middle" fill="#5a6af0">5.27</text><text transform="translate(893.4 561.7) scale(0.870 1)" font-size="10.1" text-anchor="middle" fill="#5a6af0">4.25</text><text transform="translate(938.9 561.7) scale(0.870 1)" font-size="10.1" text-anchor="middle" fill="#5a6af0">3.38</text><text transform="translate(984.4 561.7) scale(0.870 1)" font-size="10.1" text-anchor="middle" fill="#5a6af0">2.66</text><text transform="translate(1029.8 561.7) scale(0.870 1)" font-size="10.1" text-anchor="middle" fill="#5a6af0">2.06</text><text transform="translate(1075.3 561.7) scale(0.870 1)" font-size="10.1" text-anchor="middle" fill="#5a6af0">1.57</text><rect x="602.0" y="580.5" width="41.1" height="8.4" fill="#f0787c" stroke="#86525a" stroke-width=".8"/><rect x="643.1" y="580.5" width="45.5" height="8.4" fill="#f0787c" stroke="#86525a" stroke-width=".8"/><rect x="688.6" y="580.5" width="45.5" height="8.4" fill="#f0787c" stroke="#86525a" stroke-width=".8"/><rect x="734.1" y="580.5" width="45.5" height="8.4" fill="#f0787c" stroke="#86525a" stroke-width=".8"/><rect x="779.5" y="580.5" width="45.5" height="5.6" fill="#f0787c" stroke="#86525a" stroke-width=".8"/><rect x="825.0" y="580.5" width="45.5" height="5.6" fill="#f0787c" stroke="#86525a" stroke-width=".8"/><rect x="870.5" y="580.5" width="45.5" height="5.6" fill="#f0787c" stroke="#86525a" stroke-width=".8"/><rect x="916.0" y="580.5" width="45.5" height="5.6" fill="#f0787c" stroke="#86525a" stroke-width=".8"/><rect x="961.4" y="580.5" width="45.5" height="2.8" fill="#f0787c" stroke="#86525a" stroke-width=".8"/><rect x="1006.9" y="580.5" width="45.5" height="2.8" fill="#f0787c" stroke="#86525a" stroke-width=".8"/><rect x="1052.4" y="580.5" width="29.6" height="2.8" fill="#f0787c" stroke="#86525a" stroke-width=".8"/><text transform="translate(620.6 579.7) scale(0.870 1)" font-size="10.1" text-anchor="middle" fill="#f06464">-0.03</text><text transform="translate(666.1 579.7) scale(0.870 1)" font-size="10.1" text-anchor="middle" fill="#f06464">-0.03</text><text transform="translate(711.5 579.7) scale(0.870 1)" font-size="10.1" text-anchor="middle" fill="#f06464">-0.03</text><text transform="translate(757.0 579.7) scale(0.870 1)" font-size="10.1" text-anchor="middle" fill="#f06464">-0.03</text><text transform="translate(802.5 579.7) scale(0.870 1)" font-size="10.1" text-anchor="middle" fill="#f06464">-0.02</text><text transform="translate(848.0 579.7) scale(0.870 1)" font-size="10.1" text-anchor="middle" fill="#f06464">-0.02</text><text transform="translate(893.4 579.7) scale(0.870 1)" font-size="10.1" text-anchor="middle" fill="#f06464">-0.02</text><text transform="translate(938.9 579.7) scale(0.870 1)" font-size="10.1" text-anchor="middle" fill="#f06464">-0.02</text><text transform="translate(984.4 579.7) scale(0.870 1)" font-size="10.1" text-anchor="middle" fill="#f06464">-0.01</text><text transform="translate(1029.8 579.7) scale(0.870 1)" font-size="10.1" text-anchor="middle" fill="#f06464">-0.01</text><text transform="translate(1075.3 579.7) scale(0.870 1)" font-size="10.1" text-anchor="middle" fill="#f06464">-0.01</text><rect x="602.0" y="604.4" width="41.1" height="2.9" fill="#4f72f4" stroke="#34407a" stroke-width=".8"/><rect x="643.1" y="602.0" width="45.5" height="5.3" fill="#4f72f4" stroke="#34407a" stroke-width=".8"/><rect x="688.6" y="600.3" width="45.5" height="7.0" fill="#4f72f4" stroke="#34407a" stroke-width=".8"/><rect x="734.1" y="599.3" width="45.5" height="8.0" fill="#4f72f4" stroke="#34407a" stroke-width=".8"/><rect x="779.5" y="599.0" width="45.5" height="8.3" fill="#4f72f4" stroke="#34407a" stroke-width=".8"/><rect x="825.0" y="599.2" width="45.5" height="8.1" fill="#4f72f4" stroke="#34407a" stroke-width=".8"/><rect x="870.5" y="599.7" width="45.5" height="7.6" fill="#4f72f4" stroke="#34407a" stroke-width=".8"/><rect x="916.0" y="600.4" width="45.5" height="6.9" fill="#4f72f4" stroke="#34407a" stroke-width=".8"/><rect x="961.4" y="601.3" width="45.5" height="6.0" fill="#4f72f4" stroke="#34407a" stroke-width=".8"/><rect x="1006.9" y="602.2" width="45.5" height="5.1" fill="#4f72f4" stroke="#34407a" stroke-width=".8"/><rect x="1052.4" y="603.1" width="29.6" height="4.2" fill="#4f72f4" stroke="#34407a" stroke-width=".8"/><text transform="translate(620.6 617.0) scale(0.870 1)" font-size="10.1" text-anchor="middle" fill="#5a6af0">9.69</text><text transform="translate(666.1 617.0) scale(0.870 1)" font-size="10.1" text-anchor="middle" fill="#5a6af0">18.16</text><text transform="translate(711.5 617.0) scale(0.870 1)" font-size="10.1" text-anchor="middle" fill="#5a6af0">23.88</text><text transform="translate(757.0 617.0) scale(0.870 1)" font-size="10.1" text-anchor="middle" fill="#5a6af0">27.11</text><text transform="translate(802.5 617.0) scale(0.870 1)" font-size="10.1" text-anchor="middle" fill="#5a6af0">28.22</text><text transform="translate(848.0 617.0) scale(0.870 1)" font-size="10.1" text-anchor="middle" fill="#5a6af0">27.67</text><text transform="translate(893.4 617.0) scale(0.870 1)" font-size="10.1" text-anchor="middle" fill="#5a6af0">25.90</text><text transform="translate(938.9 617.0) scale(0.870 1)" font-size="10.1" text-anchor="middle" fill="#5a6af0">23.35</text><text transform="translate(984.4 617.0) scale(0.870 1)" font-size="10.1" text-anchor="middle" fill="#5a6af0">20.38</text><text transform="translate(1029.8 617.0) scale(0.870 1)" font-size="10.1" text-anchor="middle" fill="#5a6af0">17.28</text><text transform="translate(1075.3 617.0) scale(0.870 1)" font-size="10.1" text-anchor="middle" fill="#5a6af0">14.27</text><rect x="602.0" y="636.0" width="41.1" height="7.1" fill="#f0787c" stroke="#86525a" stroke-width=".8"/><rect x="643.1" y="636.0" width="45.5" height="7.8" fill="#f0787c" stroke="#86525a" stroke-width=".8"/><rect x="688.6" y="636.0" width="45.5" height="8.0" fill="#f0787c" stroke="#86525a" stroke-width=".8"/><rect x="734.1" y="636.0" width="45.5" height="7.9" fill="#f0787c" stroke="#86525a" stroke-width=".8"/><rect x="779.5" y="636.0" width="45.5" height="7.5" fill="#f0787c" stroke="#86525a" stroke-width=".8"/><rect x="825.0" y="636.0" width="45.5" height="6.8" fill="#f0787c" stroke="#86525a" stroke-width=".8"/><rect x="870.5" y="636.0" width="45.5" height="6.1" fill="#f0787c" stroke="#86525a" stroke-width=".8"/><rect x="916.0" y="636.0" width="45.5" height="5.3" fill="#f0787c" stroke="#86525a" stroke-width=".8"/><rect x="961.4" y="636.0" width="45.5" height="4.5" fill="#f0787c" stroke="#86525a" stroke-width=".8"/><rect x="1006.9" y="636.0" width="45.5" height="3.8" fill="#f0787c" stroke="#86525a" stroke-width=".8"/><rect x="1052.4" y="636.0" width="29.6" height="3.1" fill="#f0787c" stroke="#86525a" stroke-width=".8"/><text transform="translate(620.6 635.2) scale(0.870 1)" font-size="10.1" text-anchor="middle" fill="#f06464">-123.58</text><text transform="translate(666.1 635.2) scale(0.870 1)" font-size="10.1" text-anchor="middle" fill="#f06464">-134.89</text><text transform="translate(711.5 635.2) scale(0.870 1)" font-size="10.1" text-anchor="middle" fill="#f06464">-138.85</text><text transform="translate(757.0 635.2) scale(0.870 1)" font-size="10.1" text-anchor="middle" fill="#f06464">-136.58</text><text transform="translate(802.5 635.2) scale(0.870 1)" font-size="10.1" text-anchor="middle" fill="#f06464">-129.42</text><text transform="translate(848.0 635.2) scale(0.870 1)" font-size="10.1" text-anchor="middle" fill="#f06464">-118.81</text><text transform="translate(893.4 635.2) scale(0.870 1)" font-size="10.1" text-anchor="middle" fill="#f06464">-106.08</text><text transform="translate(938.9 635.2) scale(0.870 1)" font-size="10.1" text-anchor="middle" fill="#f06464">-92.40</text><text transform="translate(984.4 635.2) scale(0.870 1)" font-size="10.1" text-anchor="middle" fill="#f06464">-78.70</text><text transform="translate(1029.8 635.2) scale(0.870 1)" font-size="10.1" text-anchor="middle" fill="#f06464">-65.66</text><text transform="translate(1075.3 635.2) scale(0.870 1)" font-size="10.1" text-anchor="middle" fill="#f06464">-53.72</text><rect x="852.8" y="478.5" width="41.4" height="171.4" rx="3" fill="#e9eef8" fill-opacity=".9" stroke="#6f7b92" stroke-width="1"/><text transform="translate(873.5 487.8) scale(0.870 1)" font-size="10.1" text-anchor="middle" fill="#222">6379.51</text><text transform="translate(873.5 516.3) scale(0.870 1)" font-size="10.1" text-anchor="middle" fill="#e82020" stroke="#e82020" stroke-width=".35">-487</text><text transform="translate(873.5 529.5) scale(0.870 1)" font-size="10.1" text-anchor="middle" fill="#e82020" stroke="#e82020" stroke-width=".35">-2.6%</text><text transform="translate(873.5 557.0) scale(0.870 1)" font-size="10.1" text-anchor="middle" fill="#2a3af0" stroke="#2a3af0" stroke-width=".35">4.65</text><text transform="translate(873.5 584.5) scale(0.870 1)" font-size="10.1" text-anchor="middle" fill="#e82020" stroke="#e82020" stroke-width=".35">-0.02</text><text transform="translate(873.5 611.8) scale(0.870 1)" font-size="10.1" text-anchor="middle" fill="#2a3af0" stroke="#2a3af0" stroke-width=".35">26.74</text><text transform="translate(873.5 639.5) scale(0.870 1)" font-size="10.1" text-anchor="middle" fill="#e82020" stroke="#e82020" stroke-width=".35">-111.47</text></svg>
<div style="position:absolute;left:554px;top:654px;width:526px;height:21px;background:#293955;"></div>
<div style="position:absolute;left:554px;top:653px;width:526px;height:1px;background:#e9edf5;"></div>
<span class="t" style="top:658.4px;right:14.5px;font-size:10.2px;color:#fff;">320%</span>
<div style="position:absolute;left:1071.5px;top:664.3px;width:9px;height:1px;background:#c8cede;"></div>
</body></html>
